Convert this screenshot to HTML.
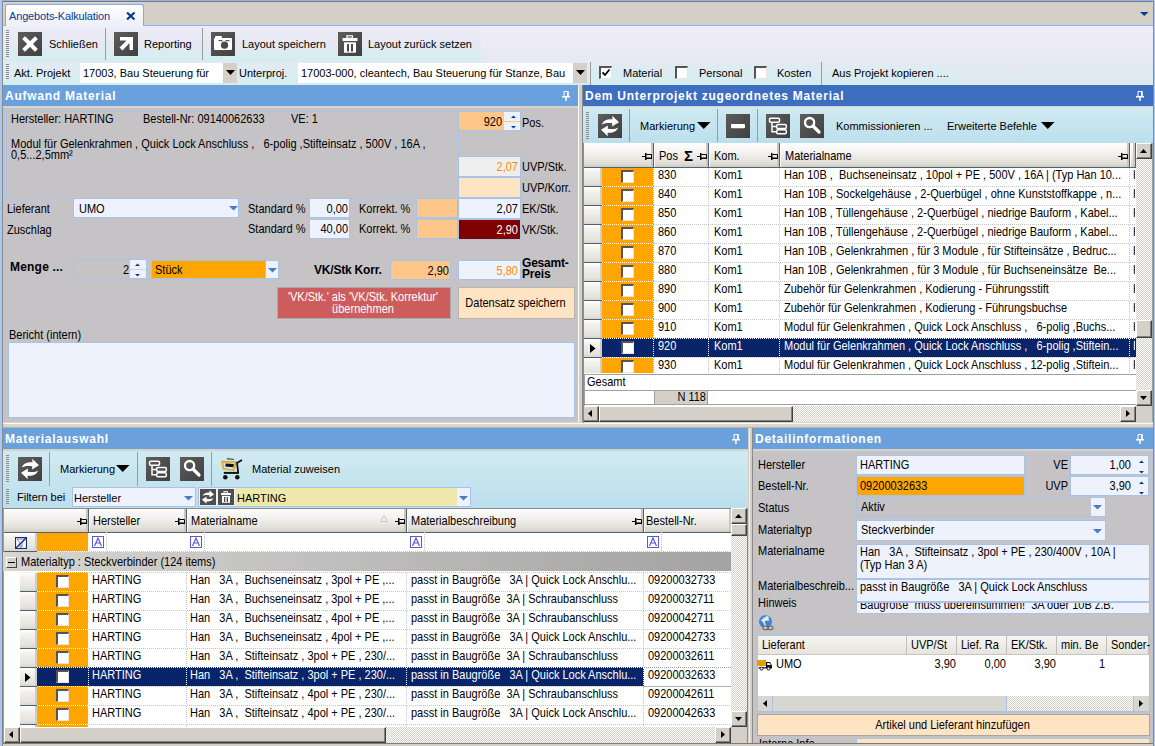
<!DOCTYPE html><html><head><meta charset="utf-8"><style>
html,body{margin:0;padding:0;}
body{width:1155px;height:746px;position:relative;overflow:hidden;background:#d4d0c8;font-family:"Liberation Sans",sans-serif;font-size:11px;color:#000;}
.a{position:absolute;box-sizing:border-box;}
.t{white-space:pre;}
</style></head><body>

<div class="a" style="left:0px;top:0px;width:1155px;height:1px;background:#8fb4ea"></div>
<div class="a" style="left:0px;top:0px;width:2px;height:746px;background:#a9c8f2"></div>
<div class="a" style="left:1154px;top:0px;width:1px;height:746px;background:#a9c8f2"></div>
<div class="a" style="left:2px;top:1px;width:1152px;height:1px;background:#7c7c7c"></div>
<div class="a" style="left:2px;top:1px;width:1px;height:745px;background:#8a8a8a"></div>
<div class="a" style="left:1153px;top:1px;width:1px;height:745px;background:#8a8a8a"></div>
<div class="a" style="left:5px;top:4px;width:139px;height:22px;background:linear-gradient(#ffffff,#eeeef8);border:1px solid #86abe0;border-bottom:none;border-radius:3px 3px 0 0"></div>
<div class="a" style="left:3px;top:25px;width:1150px;height:1px;background:#8fb4ea"></div>
<div class="a" style="left:6px;top:25px;width:137px;height:1px;background:#f4f4fb"></div>
<div class="a t" style="left:9px;top:8.86px;line-height:15px;font-size:11px;color:#0b3b8f;letter-spacing:-0.15px;">Angebots-Kalkulation</div>
<svg class="a" style="left:126px;top:12px" width="10" height="8"><path d="M1 0.5L8.5 7.5M8.5 0.5L1 7.5" stroke="#0b3b8f" stroke-width="2.2"/></svg>
<svg class="a" style="left:1140px;top:12px" width="9" height="5"><path d="M0 0H8.5L4.25 4Z" fill="#0b3b8f"/></svg>
<div class="a" style="left:3px;top:26px;width:1150px;height:59px;background:linear-gradient(#efedf8 0%,#e9e9f4 50%,#dde9ef 100%)"></div>
<div class="a" style="left:3px;top:26px;width:478px;height:36px;background:linear-gradient(#eeecf8 0%,#e6e8f4 45%,#d3eef0 100%)"></div>
<div class="a" style="left:3px;top:62px;width:957px;height:23px;background:linear-gradient(#e4eaf3 0%,#d3eef0 100%)"></div>
<div class="a" style="left:6px;top:30px;width:3px;height:28px;background:repeating-linear-gradient(#8c8c8c 0 1px,transparent 1px 2px)"></div>
<div class="a" style="left:6px;top:64px;width:3px;height:16px;background:repeating-linear-gradient(#8c8c8c 0 1px,transparent 1px 2px)"></div>
<div id="top1icons"></div>
<svg width="0" height="0" style="position:absolute"><defs><linearGradient id="ig" x1="0" y1="0" x2="1" y2="1"><stop offset="0" stop-color="#5c5c5c"/><stop offset="1" stop-color="#404040"/></linearGradient></defs></svg>
<svg class="a" style="left:18px;top:32px" width="24" height="24" viewBox="0 0 24 24"><defs></defs><rect x="0" y="0" width="24" height="24" fill="#4e4e4e"/><rect x="0" y="0" width="24" height="24" fill="url(#ig)"/><path d="M7 7L17 17M17 7L7 17" stroke="#fff" stroke-width="4" stroke-linecap="square"/></svg>
<svg class="a" style="left:114px;top:32px" width="24" height="24" viewBox="0 0 24 24"><defs></defs><rect x="0" y="0" width="24" height="24" fill="#4e4e4e"/><rect x="0" y="0" width="24" height="24" fill="url(#ig)"/><path d="M6 5H19V18H15.5V11L8.5 18.5L5.5 15.5L12.5 8.5H6Z" fill="#fff"/></svg>
<svg class="a" style="left:211px;top:32px" width="24" height="24" viewBox="0 0 24 24"><defs></defs><rect x="0" y="0" width="24" height="24" fill="#4e4e4e"/><rect x="0" y="0" width="24" height="24" fill="url(#ig)"/><path d="M3 7Q3 6 4 6H4V5Q4 4 5 4H10Q11 4 11 5V6H20Q21 6 21 7V17Q21 18 20 18H4Q3 18 3 17Z" fill="#fff"/><circle cx="13.5" cy="13.2" r="3.6" fill="#4a4a4a"/><rect x="7.5" y="8" width="4" height="1.2" fill="#555"/><rect x="14.5" y="8" width="4" height="1.2" fill="#555"/></svg>
<svg class="a" style="left:338px;top:32px" width="24" height="24" viewBox="0 0 24 24"><defs></defs><rect x="0" y="0" width="24" height="24" fill="#4e4e4e"/><rect x="0" y="0" width="24" height="24" fill="url(#ig)"/><rect x="8.3" y="3.2" width="6.7" height="3" fill="#fff"/><rect x="9.6" y="4.4" width="4.2" height="1.2" fill="#4a4a4a"/><rect x="4.6" y="6" width="14.9" height="3" fill="#fff"/><rect x="6" y="10.3" width="12" height="10.4" fill="#fff"/><rect x="9" y="12" width="2" height="7.5" fill="#4a4a4a"/><rect x="13" y="12" width="2" height="7.5" fill="#4a4a4a"/></svg>
<div class="a" style="left:105px;top:28px;width:1px;height:32px;background:#9b9b9b"></div>
<div class="a" style="left:202px;top:28px;width:1px;height:32px;background:#9b9b9b"></div>
<div class="a t" style="left:49px;top:36.86px;line-height:15px;font-size:11px;">Schließen</div>
<div class="a t" style="left:144px;top:36.86px;line-height:15px;font-size:11px;">Reporting</div>
<div class="a t" style="left:242px;top:36.86px;line-height:15px;font-size:11px;">Layout speichern</div>
<div class="a t" style="left:368px;top:36.86px;line-height:15px;font-size:11px;">Layout zurück setzen</div>
<div class="a t" style="left:14px;top:65.86px;line-height:15px;font-size:11px;">Akt. Projekt</div>
<div class="a" style="left:80px;top:63px;width:157px;height:20px;background:#fff"></div>
<div class="a" style="left:223px;top:63px;width:14px;height:20px;background:#d4d0c8"></div>
<svg class="a" style="left:226px;top:70px" width="9" height="5"><path d="M0 0H9L4.5 5Z" fill="#000"/></svg>
<div class="a t" style="left:83px;top:65.86px;line-height:15px;font-size:11px;">17003, Bau Steuerung für</div>
<div class="a t" style="left:239px;top:65.86px;line-height:15px;font-size:11px;">Unterproj.</div>
<div class="a" style="left:298px;top:63px;width:289px;height:20px;background:#fff"></div>
<div class="a" style="left:573px;top:63px;width:14px;height:20px;background:#d4d0c8"></div>
<svg class="a" style="left:576px;top:70px" width="9" height="5"><path d="M0 0H9L4.5 5Z" fill="#000"/></svg>
<div class="a t" style="left:301px;top:65.86px;line-height:15px;font-size:11px;">17003-000, cleantech, Bau Steuerung für Stanze, Bau</div>
<div class="a" style="left:590px;top:62px;width:1px;height:23px;background:#9b9b9b"></div>
<div class="a" style="left:821px;top:62px;width:1px;height:23px;background:#9b9b9b"></div>
<div class="a" style="left:599px;top:66px;width:13px;height:13px;background:#fff;border-top:2px solid #555;border-left:2px solid #555;border-right:1px solid #e6e4de;border-bottom:1px solid #e6e4de"></div>
<svg class="a" style="left:601px;top:68px" width="10" height="10"><path d="M1.5 4.5L4 7L8.5 1.5" fill="none" stroke="#000" stroke-width="1.8"/></svg>
<div class="a" style="left:675px;top:66px;width:13px;height:13px;background:#fff;border-top:2px solid #555;border-left:2px solid #555;border-right:1px solid #e6e4de;border-bottom:1px solid #e6e4de"></div>
<div class="a" style="left:754px;top:66px;width:13px;height:13px;background:#fff;border-top:2px solid #555;border-left:2px solid #555;border-right:1px solid #e6e4de;border-bottom:1px solid #e6e4de"></div>
<div class="a t" style="left:623px;top:65.86px;line-height:15px;font-size:11px;">Material</div>
<div class="a t" style="left:699px;top:65.86px;line-height:15px;font-size:11px;">Personal</div>
<div class="a t" style="left:777px;top:65.86px;line-height:15px;font-size:11px;">Kosten</div>
<div class="a t" style="left:832px;top:65.86px;line-height:15px;font-size:11px;">Aus Projekt kopieren ....</div>
<div class="a" style="left:3px;top:85px;width:575px;height:21px;background:#6aa0dc"></div>
<div class="a t" style="left:5px;top:88.03px;line-height:16px;font-size:12px;font-weight:bold;color:#fff;letter-spacing:0.75px;">Aufwand Material</div>
<svg class="a" style="left:562px;top:91px" width="8" height="10"><path d="M2 0.5H6V5.5H2Z" fill="none" stroke="#fff" stroke-width="1"/><rect x="5" y="0" width="1.6" height="6" fill="#fff"/><rect x="0" y="5" width="8" height="1.5" fill="#fff"/><rect x="3.2" y="6" width="1.5" height="4" fill="#fff"/></svg>
<div class="a" style="left:3px;top:106px;width:575px;height:2px;background:#d6d3cc"></div>
<div class="a" style="left:3px;top:108px;width:575px;height:314px;background:#c5c3c6"></div>
<div class="a" style="left:6px;top:111px;width:453px;height:88px;border:1px solid #a8c3e6"></div>
<div class="a t" style="left:11px;top:111.27px;line-height:15px;font-size:11px;transform:scaleY(1.125);transform-origin:0 0;">Hersteller: HARTING</div>
<div class="a t" style="left:143px;top:111.27px;line-height:15px;font-size:11px;transform:scaleY(1.125);transform-origin:0 0;">Bestell-Nr: 09140062633</div>
<div class="a t" style="left:291px;top:111.27px;line-height:15px;font-size:11px;transform:scaleY(1.125);transform-origin:0 0;">VE: 1</div>
<div class="a t" style="left:11px;top:136.27px;line-height:15px;font-size:11px;transform:scaleY(1.125);transform-origin:0 0;">Modul für Gelenkrahmen , Quick Lock Anschluss ,   6-polig ,Stifteinsatz , 500V , 16A ,</div>
<div class="a t" style="left:11px;top:147.27px;line-height:15px;font-size:11px;transform:scaleY(1.125);transform-origin:0 0;">0,5...2,5mm²</div>
<div class="a" style="left:458px;top:111px;width:63px;height:20px;background:#eef2fd;border:1px solid #a8c3e6"></div>
<div class="a" style="left:459px;top:112px;width:45px;height:18px;background:#ffc68a"></div>
<div class="a" style="left:504px;top:121px;width:16px;height:1px;background:#ffc68a"></div>
<svg class="a" style="left:511px;top:115px" width="5" height="14"><path d="M0 3H5L2.5 0.5Z" fill="#0b3b8f"/><path d="M0 11H5L2.5 13.5Z" fill="#0b3b8f"/></svg>
<div class="a t" style="left:202px;top:114.27px;line-height:15px;font-size:11px;transform:scaleY(1.125);transform-origin:0 0;width:300px;overflow:hidden;text-overflow:ellipsis;text-align:right;">920</div>
<div class="a t" style="left:522px;top:115.27px;line-height:15px;font-size:11px;transform:scaleY(1.125);transform-origin:0 0;">Pos.</div>
<div class="a" style="left:458px;top:156px;width:63px;height:21px;background:#eeeeee;border:1px solid #a8c3e6"></div>
<div class="a t" style="left:218px;top:159.27px;line-height:15px;font-size:11px;transform:scaleY(1.125);transform-origin:0 0;width:300px;overflow:hidden;text-overflow:ellipsis;text-align:right;color:#ff8c00;">2,07</div>
<div class="a t" style="left:522px;top:159.27px;line-height:15px;font-size:11px;transform:scaleY(1.125);transform-origin:0 0;">UVP/Stk.</div>
<div class="a" style="left:458px;top:177px;width:63px;height:21px;background:#ffe4c4;border:1px solid #a8c3e6"></div>
<div class="a t" style="left:522px;top:180.27px;line-height:15px;font-size:11px;transform:scaleY(1.125);transform-origin:0 0;">UVP/Korr.</div>
<div class="a" style="left:458px;top:198px;width:63px;height:21px;background:#eef2fd;border:1px solid #a8c3e6"></div>
<div class="a t" style="left:218px;top:201.27px;line-height:15px;font-size:11px;transform:scaleY(1.125);transform-origin:0 0;width:300px;overflow:hidden;text-overflow:ellipsis;text-align:right;">2,07</div>
<div class="a t" style="left:522px;top:201.27px;line-height:15px;font-size:11px;transform:scaleY(1.125);transform-origin:0 0;">EK/Stk.</div>
<div class="a" style="left:458px;top:219px;width:63px;height:21px;background:#800000;border:1px solid #a8c3e6"></div>
<div class="a t" style="left:218px;top:222.27px;line-height:15px;font-size:11px;transform:scaleY(1.125);transform-origin:0 0;width:300px;overflow:hidden;text-overflow:ellipsis;text-align:right;color:#fff;">2,90</div>
<div class="a t" style="left:522px;top:222.27px;line-height:15px;font-size:11px;transform:scaleY(1.125);transform-origin:0 0;">VK/Stk.</div>
<div class="a t" style="left:7px;top:201.27px;line-height:15px;font-size:11px;transform:scaleY(1.125);transform-origin:0 0;">Lieferant</div>
<div class="a" style="left:73px;top:198px;width:166px;height:20px;background:#eef2fd;border:1px solid #a8c3e6"></div>
<div class="a t" style="left:79px;top:201.27px;line-height:15px;font-size:11px;transform:scaleY(1.125);transform-origin:0 0;">UMO</div>
<svg class="a" style="left:229px;top:206px" width="9" height="5"><path d="M0 0H9L4.5 4.5Z" fill="#4a7cc0"/></svg>
<div class="a t" style="left:7px;top:222.27px;line-height:15px;font-size:11px;transform:scaleY(1.125);transform-origin:0 0;">Zuschlag</div>
<div class="a t" style="left:248px;top:201.27px;line-height:15px;font-size:11px;transform:scaleY(1.125);transform-origin:0 0;">Standard %</div>
<div class="a t" style="left:248px;top:221.27px;line-height:15px;font-size:11px;transform:scaleY(1.125);transform-origin:0 0;">Standard %</div>
<div class="a" style="left:309px;top:198px;width:41px;height:20px;background:#eef2fd;border:1px solid #a8c3e6"></div>
<div class="a t" style="left:48px;top:201.27px;line-height:15px;font-size:11px;transform:scaleY(1.125);transform-origin:0 0;width:300px;overflow:hidden;text-overflow:ellipsis;text-align:right;">0,00</div>
<div class="a" style="left:309px;top:219px;width:41px;height:20px;background:#eef2fd;border:1px solid #a8c3e6"></div>
<div class="a t" style="left:48px;top:221.27px;line-height:15px;font-size:11px;transform:scaleY(1.125);transform-origin:0 0;width:300px;overflow:hidden;text-overflow:ellipsis;text-align:right;">40,00</div>
<div class="a t" style="left:359px;top:201.27px;line-height:15px;font-size:11px;transform:scaleY(1.125);transform-origin:0 0;">Korrekt. %</div>
<div class="a t" style="left:359px;top:221.27px;line-height:15px;font-size:11px;transform:scaleY(1.125);transform-origin:0 0;">Korrekt. %</div>
<div class="a" style="left:416px;top:198px;width:42px;height:20px;background:#ffc68a;border:1px solid #a8c3e6"></div>
<div class="a" style="left:416px;top:219px;width:42px;height:20px;background:#ffc68a;border:1px solid #a8c3e6"></div>
<div class="a t" style="left:10px;top:259.03px;line-height:16px;font-size:12px;font-weight:bold;letter-spacing:-0.2px;letter-spacing:0.2px;">Menge ...</div>
<div class="a" style="left:73px;top:259px;width:74px;height:20px;background:#c5c3c6;border:1px solid #a8c3e6"></div>
<div class="a" style="left:130px;top:260px;width:16px;height:18px;background:#eef2fd"></div>
<div class="a" style="left:130px;top:269px;width:16px;height:1px;background:#c8d4e8"></div>
<svg class="a" style="left:135px;top:263px" width="5" height="14"><path d="M0 3H5L2.5 0.5Z" fill="#0b3b8f"/><path d="M0 11H5L2.5 13.5Z" fill="#0b3b8f"/></svg>
<div class="a t" style="left:-171px;top:262.27px;line-height:15px;font-size:11px;transform:scaleY(1.125);transform-origin:0 0;width:300px;overflow:hidden;text-overflow:ellipsis;text-align:right;">2</div>
<div class="a" style="left:151px;top:260px;width:128px;height:19px;background:#ffa500;border:1px solid #a8c3e6"></div>
<div class="a" style="left:265px;top:260px;width:14px;height:19px;background:#eef2fd;border:1px solid #a8c3e6"></div>
<svg class="a" style="left:268px;top:268px" width="9" height="5"><path d="M0 0H9L4.5 4.5Z" fill="#4a7cc0"/></svg>
<div class="a t" style="left:155px;top:262.27px;line-height:15px;font-size:11px;transform:scaleY(1.125);transform-origin:0 0;">Stück</div>
<div class="a t" style="left:314px;top:262.03px;line-height:16px;font-size:12px;font-weight:bold;letter-spacing:-0.2px;">VK/Stk Korr.</div>
<div class="a" style="left:390px;top:260px;width:61px;height:20px;background:#ffc68a;border:1px solid #a8c3e6"></div>
<div class="a t" style="left:149px;top:263.27px;line-height:15px;font-size:11px;transform:scaleY(1.125);transform-origin:0 0;width:300px;overflow:hidden;text-overflow:ellipsis;text-align:right;">2,90</div>
<div class="a" style="left:458px;top:260px;width:63px;height:20px;background:#eef2fd;border:1px solid #a8c3e6"></div>
<div class="a t" style="left:218px;top:263.27px;line-height:15px;font-size:11px;transform:scaleY(1.125);transform-origin:0 0;width:300px;overflow:hidden;text-overflow:ellipsis;text-align:right;color:#ff8c00;">5,80</div>
<div class="a t" style="left:522px;top:255.03px;line-height:16px;font-size:12px;font-weight:bold;letter-spacing:-0.2px;">Gesamt-</div>
<div class="a t" style="left:522px;top:266.03px;line-height:16px;font-size:12px;font-weight:bold;letter-spacing:-0.2px;">Preis</div>
<div class="a" style="left:277px;top:287px;width:174px;height:32px;background:#cd5c5c;border:1px solid #b0a8a8"></div>
<div class="a t" style="left:276px;top:289.27px;line-height:15px;font-size:11px;transform:scaleY(1.125);transform-origin:0 0;width:174px;overflow:hidden;text-overflow:ellipsis;text-align:center;color:#fff;">&#x27;VK/Stk.&#x27; als &#x27;VK/Stk. Korrektur&#x27;</div>
<div class="a t" style="left:276px;top:301.27px;line-height:15px;font-size:11px;transform:scaleY(1.125);transform-origin:0 0;width:174px;overflow:hidden;text-overflow:ellipsis;text-align:center;color:#fff;">übernehmen</div>
<div class="a" style="left:458px;top:287px;width:117px;height:32px;background:#ffe4c4;border:1px solid #b8b4b0"></div>
<div class="a t" style="left:457px;top:295.27px;line-height:15px;font-size:11px;transform:scaleY(1.125);transform-origin:0 0;width:117px;overflow:hidden;text-overflow:ellipsis;text-align:center;">Datensatz speichern</div>
<div class="a t" style="left:9px;top:327.27px;line-height:15px;font-size:11px;transform:scaleY(1.125);transform-origin:0 0;">Bericht (intern)</div>
<div class="a" style="left:8px;top:342px;width:567px;height:76px;background:#eef2fd;border:1px solid #a8c3e6"></div>
<div class="a" style="left:578px;top:85px;width:5px;height:337px;background:#d4d0c8"></div>
<div class="a" style="left:578px;top:85px;width:1px;height:337px;background:#fbfaf6"></div>
<div class="a" style="left:582px;top:85px;width:1px;height:337px;background:#8a8a8a"></div>
<div class="a" style="left:3px;top:422px;width:1150px;height:6px;background:#d8d5cd"></div>
<div class="a" style="left:3px;top:423px;width:1150px;height:1px;background:#fbfaf6"></div>
<div class="a" style="left:3px;top:427px;width:1150px;height:1px;background:#b8b4ac"></div>
<div class="a" style="left:583px;top:85px;width:570px;height:21px;background:#3d6ec0"></div>
<div class="a t" style="left:585px;top:88.03px;line-height:16px;font-size:12px;font-weight:bold;color:#fff;letter-spacing:0.75px;">Dem Unterprojekt zugeordnetes Material</div>
<svg class="a" style="left:1136px;top:91px" width="8" height="10"><path d="M2 0.5H6V5.5H2Z" fill="none" stroke="#fff" stroke-width="1"/><rect x="5" y="0" width="1.6" height="6" fill="#fff"/><rect x="0" y="5" width="8" height="1.5" fill="#fff"/><rect x="3.2" y="6" width="1.5" height="4" fill="#fff"/></svg>
<div class="a" style="left:583px;top:106px;width:570px;height:1px;background:#d6d3cc"></div>
<div class="a" style="left:583px;top:107px;width:570px;height:36px;background:linear-gradient(#d0eaf1,#bcdfed)"></div>
<div class="a" style="left:586px;top:112px;width:3px;height:28px;background:repeating-linear-gradient(#8c8c8c 0 1px,transparent 1px 2px)"></div>
<svg class="a" style="left:598px;top:114px" width="24" height="24" viewBox="0 0 24 24"><defs></defs><rect x="0" y="0" width="24" height="24" fill="#4e4e4e"/><rect x="0" y="0" width="24" height="24" fill="url(#ig)"/><path d="M4 10.5C5 6.5 9 4.8 14.5 5.2L14.2 1.8L21 8.2L14 12.6L14.3 9.2C9.5 8.6 6 9 4 10.5Z" fill="#fff"/><path d="M20 13.5C19 17.5 15 19.2 9.5 18.8L9.8 22.2L3 15.8L10 11.4L9.7 14.8C14.5 15.4 18 15 20 13.5Z" fill="#fff"/></svg>
<div class="a" style="left:629px;top:109px;width:1px;height:33px;background:#9b9b9b"></div>
<div class="a t" style="left:640px;top:118.86px;line-height:15px;font-size:11px;">Markierung</div>
<svg class="a" style="left:697px;top:122px" width="14" height="8"><path d="M0 0H13.5L6.75 7Z" fill="#000"/></svg>
<div class="a" style="left:717px;top:109px;width:1px;height:33px;background:#9b9b9b"></div>
<svg class="a" style="left:726px;top:114px" width="24" height="24" viewBox="0 0 24 24"><defs></defs><rect x="0" y="0" width="24" height="24" fill="#4e4e4e"/><rect x="0" y="0" width="24" height="24" fill="url(#ig)"/><rect x="5" y="10" width="14" height="4.2" rx="1" fill="#fff"/></svg>
<div class="a" style="left:757px;top:109px;width:1px;height:33px;background:#9b9b9b"></div>
<svg class="a" style="left:766px;top:114px" width="24" height="24" viewBox="0 0 24 24"><defs></defs><rect x="0" y="0" width="24" height="24" fill="#4e4e4e"/><rect x="0" y="0" width="24" height="24" fill="url(#ig)"/><g fill="none" stroke="#fff" stroke-width="1.5"><rect x="3.5" y="4.2" width="10" height="4" rx="1.2"/><rect x="10.7" y="10.5" width="9.6" height="4" rx="1.2"/><rect x="10.7" y="15.7" width="9.6" height="4" rx="1.2"/><path d="M6 8.2V17.7H10.7M6 12.5H10.7"/></g></svg>
<svg class="a" style="left:800px;top:114px" width="24" height="24" viewBox="0 0 24 24"><defs></defs><rect x="0" y="0" width="24" height="24" fill="#4e4e4e"/><rect x="0" y="0" width="24" height="24" fill="url(#ig)"/><circle cx="9.6" cy="8.6" r="4.6" fill="none" stroke="#fff" stroke-width="2.3"/><path d="M13 12L19 18" stroke="#fff" stroke-width="3.2" stroke-linecap="round"/></svg>
<div class="a t" style="left:836px;top:118.86px;line-height:15px;font-size:11px;">Kommissionieren ...</div>
<div class="a t" style="left:947px;top:118.86px;line-height:15px;font-size:11px;">Erweiterte Befehle</div>
<svg class="a" style="left:1041px;top:122px" width="14" height="8"><path d="M0 0H13.5L6.75 7Z" fill="#000"/></svg>
<div class="a" style="left:583px;top:143px;width:570px;height:279px;background:#fff"></div>
<div class="a" style="left:1152px;top:143px;width:1px;height:279px;background:#a0a0a0"></div>
<div class="a" style="left:583px;top:143px;width:569px;height:1px;background:#8a8a8a"></div>
<div class="a" style="left:583px;top:143px;width:71px;height:24px;background:linear-gradient(#fefefe,#f1f0ec 45%,#e2e0d9 82%,#d0cdc5);border-right:1px solid #4f6470;box-shadow:inset -2px 0 0 #c9c7c0,inset 1px 0 0 #fff"></div>
<svg class="a" style="left:642px;top:153px" width="10" height="7"><rect x="0" y="3" width="3" height="1" fill="#000"/><rect x="3" y="0" width="1.5" height="7" fill="#000"/><path d="M4.5 1.5H9.5V5.5H4.5" fill="none" stroke="#000" stroke-width="1"/><rect x="4" y="4.5" width="6" height="1.5" fill="#000"/></svg>
<div class="a" style="left:654px;top:143px;width:55px;height:24px;background:linear-gradient(#fefefe,#f1f0ec 45%,#e2e0d9 82%,#d0cdc5);border-right:1px solid #4f6470;box-shadow:inset -2px 0 0 #c9c7c0,inset 1px 0 0 #fff"></div>
<div class="a t" style="left:659px;top:148.27px;line-height:15px;font-size:11px;transform:scaleY(1.125);transform-origin:0 0;">Pos</div>
<svg class="a" style="left:697px;top:153px" width="10" height="7"><rect x="0" y="3" width="3" height="1" fill="#000"/><rect x="3" y="0" width="1.5" height="7" fill="#000"/><path d="M4.5 1.5H9.5V5.5H4.5" fill="none" stroke="#000" stroke-width="1"/><rect x="4" y="4.5" width="6" height="1.5" fill="#000"/></svg>
<div class="a t" style="left:684px;top:148px;font-size:15px;font-weight:bold;line-height:16px">&#931;</div>
<div class="a" style="left:709px;top:143px;width:71px;height:24px;background:linear-gradient(#fefefe,#f1f0ec 45%,#e2e0d9 82%,#d0cdc5);border-right:1px solid #4f6470;box-shadow:inset -2px 0 0 #c9c7c0,inset 1px 0 0 #fff"></div>
<div class="a t" style="left:714px;top:148.27px;line-height:15px;font-size:11px;transform:scaleY(1.125);transform-origin:0 0;">Kom.</div>
<svg class="a" style="left:768px;top:153px" width="10" height="7"><rect x="0" y="3" width="3" height="1" fill="#000"/><rect x="3" y="0" width="1.5" height="7" fill="#000"/><path d="M4.5 1.5H9.5V5.5H4.5" fill="none" stroke="#000" stroke-width="1"/><rect x="4" y="4.5" width="6" height="1.5" fill="#000"/></svg>
<div class="a" style="left:780px;top:143px;width:350px;height:24px;background:linear-gradient(#fefefe,#f1f0ec 45%,#e2e0d9 82%,#d0cdc5);border-right:1px solid #4f6470;box-shadow:inset -2px 0 0 #c9c7c0,inset 1px 0 0 #fff"></div>
<div class="a t" style="left:785px;top:148.27px;line-height:15px;font-size:11px;transform:scaleY(1.125);transform-origin:0 0;">Materialname</div>
<svg class="a" style="left:1118px;top:153px" width="10" height="7"><rect x="0" y="3" width="3" height="1" fill="#000"/><rect x="3" y="0" width="1.5" height="7" fill="#000"/><path d="M4.5 1.5H9.5V5.5H4.5" fill="none" stroke="#000" stroke-width="1"/><rect x="4" y="4.5" width="6" height="1.5" fill="#000"/></svg>
<div class="a" style="left:1130px;top:143px;width:6px;height:24px;background:linear-gradient(#fefefe,#f1f0ec 45%,#e2e0d9 82%,#d0cdc5);border-right:1px solid #4f6470;box-shadow:inset -2px 0 0 #c9c7c0,inset 1px 0 0 #fff"></div>
<div class="a" style="left:583px;top:167px;width:553px;height:1px;background:#4f6470"></div>
<div class="a" style="left:584px;top:167px;width:18px;height:19px;background:linear-gradient(#ffffff,#f2f1ed 25%,#e4e2dc 85%,#d6d4ce);border-top:1px solid #4f6470;box-shadow:inset -2px 0 0 #cfcdc6"></div>
<div class="a" style="left:602px;top:168px;width:534px;height:18px;background:#fff"></div>
<div class="a" style="left:602px;top:168px;width:52px;height:18px;background:#ffa500"></div>
<div class="a" style="left:653px;top:168px;width:1px;height:18px;background:repeating-linear-gradient(#fff 0 1px,transparent 1px 2px)"></div>
<div class="a" style="left:708px;top:168px;width:1px;height:18px;background:repeating-linear-gradient(#c4c4c4 0 1px,transparent 1px 2px)"></div>
<div class="a" style="left:779px;top:168px;width:1px;height:18px;background:repeating-linear-gradient(#c4c4c4 0 1px,transparent 1px 2px)"></div>
<div class="a" style="left:1129px;top:168px;width:1px;height:18px;background:repeating-linear-gradient(#c4c4c4 0 1px,transparent 1px 2px)"></div>
<div class="a" style="left:621px;top:170px;width:13px;height:13px;background:#fff;border-top:2px solid #555;border-left:2px solid #555;border-right:1px solid #e6e4de;border-bottom:1px solid #e6e4de"></div>
<div class="a t" style="left:658px;top:167.27px;line-height:15px;font-size:11px;transform:scaleY(1.125);transform-origin:0 0;color:#000;">830</div>
<div class="a t" style="left:714px;top:167.27px;line-height:15px;font-size:11px;transform:scaleY(1.125);transform-origin:0 0;color:#000;">Kom1</div>
<div class="a t" style="left:784px;top:167.27px;line-height:15px;font-size:11px;transform:scaleY(1.125);transform-origin:0 0;width:342px;overflow:hidden;text-overflow:ellipsis;color:#000;">Han 10B ,  Buchseneinsatz , 10pol + PE , 500V , 16A | (Typ Han 10...</div>
<div class="a t" style="left:1133px;top:167.27px;line-height:15px;font-size:11px;transform:scaleY(1.125);transform-origin:0 0;width:2px;overflow:hidden;text-overflow:ellipsis;color:#000;">H</div>
<div class="a" style="left:584px;top:186px;width:18px;height:19px;background:linear-gradient(#ffffff,#f2f1ed 25%,#e4e2dc 85%,#d6d4ce);border-top:1px solid #4f6470;box-shadow:inset -2px 0 0 #cfcdc6"></div>
<div class="a" style="left:602px;top:186px;width:534px;height:19px;background:#fff"></div>
<div class="a" style="left:602px;top:186px;width:52px;height:19px;background:#ffa500"></div>
<div class="a" style="left:602px;top:186px;width:534px;height:1px;background:repeating-linear-gradient(90deg,#c4c4c4 0 1px,transparent 1px 2px)"></div>
<div class="a" style="left:602px;top:186px;width:52px;height:1px;background:repeating-linear-gradient(90deg,#fff 0 1px,transparent 1px 2px)"></div>
<div class="a" style="left:653px;top:187px;width:1px;height:18px;background:repeating-linear-gradient(#fff 0 1px,transparent 1px 2px)"></div>
<div class="a" style="left:708px;top:187px;width:1px;height:18px;background:repeating-linear-gradient(#c4c4c4 0 1px,transparent 1px 2px)"></div>
<div class="a" style="left:779px;top:187px;width:1px;height:18px;background:repeating-linear-gradient(#c4c4c4 0 1px,transparent 1px 2px)"></div>
<div class="a" style="left:1129px;top:187px;width:1px;height:18px;background:repeating-linear-gradient(#c4c4c4 0 1px,transparent 1px 2px)"></div>
<div class="a" style="left:621px;top:189px;width:13px;height:13px;background:#fff;border-top:2px solid #555;border-left:2px solid #555;border-right:1px solid #e6e4de;border-bottom:1px solid #e6e4de"></div>
<div class="a t" style="left:658px;top:186.27px;line-height:15px;font-size:11px;transform:scaleY(1.125);transform-origin:0 0;color:#000;">840</div>
<div class="a t" style="left:714px;top:186.27px;line-height:15px;font-size:11px;transform:scaleY(1.125);transform-origin:0 0;color:#000;">Kom1</div>
<div class="a t" style="left:784px;top:186.27px;line-height:15px;font-size:11px;transform:scaleY(1.125);transform-origin:0 0;width:342px;overflow:hidden;text-overflow:ellipsis;color:#000;">Han 10B , Sockelgehäuse , 2-Querbügel , ohne Kunststoffkappe , n...</div>
<div class="a t" style="left:1133px;top:186.27px;line-height:15px;font-size:11px;transform:scaleY(1.125);transform-origin:0 0;width:2px;overflow:hidden;text-overflow:ellipsis;color:#000;">H</div>
<div class="a" style="left:584px;top:205px;width:18px;height:19px;background:linear-gradient(#ffffff,#f2f1ed 25%,#e4e2dc 85%,#d6d4ce);border-top:1px solid #4f6470;box-shadow:inset -2px 0 0 #cfcdc6"></div>
<div class="a" style="left:602px;top:205px;width:534px;height:19px;background:#fff"></div>
<div class="a" style="left:602px;top:205px;width:52px;height:19px;background:#ffa500"></div>
<div class="a" style="left:602px;top:205px;width:534px;height:1px;background:repeating-linear-gradient(90deg,#c4c4c4 0 1px,transparent 1px 2px)"></div>
<div class="a" style="left:602px;top:205px;width:52px;height:1px;background:repeating-linear-gradient(90deg,#fff 0 1px,transparent 1px 2px)"></div>
<div class="a" style="left:653px;top:206px;width:1px;height:18px;background:repeating-linear-gradient(#fff 0 1px,transparent 1px 2px)"></div>
<div class="a" style="left:708px;top:206px;width:1px;height:18px;background:repeating-linear-gradient(#c4c4c4 0 1px,transparent 1px 2px)"></div>
<div class="a" style="left:779px;top:206px;width:1px;height:18px;background:repeating-linear-gradient(#c4c4c4 0 1px,transparent 1px 2px)"></div>
<div class="a" style="left:1129px;top:206px;width:1px;height:18px;background:repeating-linear-gradient(#c4c4c4 0 1px,transparent 1px 2px)"></div>
<div class="a" style="left:621px;top:208px;width:13px;height:13px;background:#fff;border-top:2px solid #555;border-left:2px solid #555;border-right:1px solid #e6e4de;border-bottom:1px solid #e6e4de"></div>
<div class="a t" style="left:658px;top:205.27px;line-height:15px;font-size:11px;transform:scaleY(1.125);transform-origin:0 0;color:#000;">850</div>
<div class="a t" style="left:714px;top:205.27px;line-height:15px;font-size:11px;transform:scaleY(1.125);transform-origin:0 0;color:#000;">Kom1</div>
<div class="a t" style="left:784px;top:205.27px;line-height:15px;font-size:11px;transform:scaleY(1.125);transform-origin:0 0;width:342px;overflow:hidden;text-overflow:ellipsis;color:#000;">Han 10B , Tüllengehäuse , 2-Querbügel , niedrige Bauform , Kabel...</div>
<div class="a t" style="left:1133px;top:205.27px;line-height:15px;font-size:11px;transform:scaleY(1.125);transform-origin:0 0;width:2px;overflow:hidden;text-overflow:ellipsis;color:#000;">H</div>
<div class="a" style="left:584px;top:224px;width:18px;height:19px;background:linear-gradient(#ffffff,#f2f1ed 25%,#e4e2dc 85%,#d6d4ce);border-top:1px solid #4f6470;box-shadow:inset -2px 0 0 #cfcdc6"></div>
<div class="a" style="left:602px;top:224px;width:534px;height:19px;background:#fff"></div>
<div class="a" style="left:602px;top:224px;width:52px;height:19px;background:#ffa500"></div>
<div class="a" style="left:602px;top:224px;width:534px;height:1px;background:repeating-linear-gradient(90deg,#c4c4c4 0 1px,transparent 1px 2px)"></div>
<div class="a" style="left:602px;top:224px;width:52px;height:1px;background:repeating-linear-gradient(90deg,#fff 0 1px,transparent 1px 2px)"></div>
<div class="a" style="left:653px;top:225px;width:1px;height:18px;background:repeating-linear-gradient(#fff 0 1px,transparent 1px 2px)"></div>
<div class="a" style="left:708px;top:225px;width:1px;height:18px;background:repeating-linear-gradient(#c4c4c4 0 1px,transparent 1px 2px)"></div>
<div class="a" style="left:779px;top:225px;width:1px;height:18px;background:repeating-linear-gradient(#c4c4c4 0 1px,transparent 1px 2px)"></div>
<div class="a" style="left:1129px;top:225px;width:1px;height:18px;background:repeating-linear-gradient(#c4c4c4 0 1px,transparent 1px 2px)"></div>
<div class="a" style="left:621px;top:227px;width:13px;height:13px;background:#fff;border-top:2px solid #555;border-left:2px solid #555;border-right:1px solid #e6e4de;border-bottom:1px solid #e6e4de"></div>
<div class="a t" style="left:658px;top:224.27px;line-height:15px;font-size:11px;transform:scaleY(1.125);transform-origin:0 0;color:#000;">860</div>
<div class="a t" style="left:714px;top:224.27px;line-height:15px;font-size:11px;transform:scaleY(1.125);transform-origin:0 0;color:#000;">Kom1</div>
<div class="a t" style="left:784px;top:224.27px;line-height:15px;font-size:11px;transform:scaleY(1.125);transform-origin:0 0;width:342px;overflow:hidden;text-overflow:ellipsis;color:#000;">Han 10B , Tüllengehäuse , 2-Querbügel , niedrige Bauform , Kabel...</div>
<div class="a t" style="left:1133px;top:224.27px;line-height:15px;font-size:11px;transform:scaleY(1.125);transform-origin:0 0;width:2px;overflow:hidden;text-overflow:ellipsis;color:#000;">H</div>
<div class="a" style="left:584px;top:243px;width:18px;height:19px;background:linear-gradient(#ffffff,#f2f1ed 25%,#e4e2dc 85%,#d6d4ce);border-top:1px solid #4f6470;box-shadow:inset -2px 0 0 #cfcdc6"></div>
<div class="a" style="left:602px;top:243px;width:534px;height:19px;background:#fff"></div>
<div class="a" style="left:602px;top:243px;width:52px;height:19px;background:#ffa500"></div>
<div class="a" style="left:602px;top:243px;width:534px;height:1px;background:repeating-linear-gradient(90deg,#c4c4c4 0 1px,transparent 1px 2px)"></div>
<div class="a" style="left:602px;top:243px;width:52px;height:1px;background:repeating-linear-gradient(90deg,#fff 0 1px,transparent 1px 2px)"></div>
<div class="a" style="left:653px;top:244px;width:1px;height:18px;background:repeating-linear-gradient(#fff 0 1px,transparent 1px 2px)"></div>
<div class="a" style="left:708px;top:244px;width:1px;height:18px;background:repeating-linear-gradient(#c4c4c4 0 1px,transparent 1px 2px)"></div>
<div class="a" style="left:779px;top:244px;width:1px;height:18px;background:repeating-linear-gradient(#c4c4c4 0 1px,transparent 1px 2px)"></div>
<div class="a" style="left:1129px;top:244px;width:1px;height:18px;background:repeating-linear-gradient(#c4c4c4 0 1px,transparent 1px 2px)"></div>
<div class="a" style="left:621px;top:246px;width:13px;height:13px;background:#fff;border-top:2px solid #555;border-left:2px solid #555;border-right:1px solid #e6e4de;border-bottom:1px solid #e6e4de"></div>
<div class="a t" style="left:658px;top:243.27px;line-height:15px;font-size:11px;transform:scaleY(1.125);transform-origin:0 0;color:#000;">870</div>
<div class="a t" style="left:714px;top:243.27px;line-height:15px;font-size:11px;transform:scaleY(1.125);transform-origin:0 0;color:#000;">Kom1</div>
<div class="a t" style="left:784px;top:243.27px;line-height:15px;font-size:11px;transform:scaleY(1.125);transform-origin:0 0;width:342px;overflow:hidden;text-overflow:ellipsis;color:#000;">Han 10B , Gelenkrahmen , für 3 Module , für Stifteinsätze , Bedruc...</div>
<div class="a t" style="left:1133px;top:243.27px;line-height:15px;font-size:11px;transform:scaleY(1.125);transform-origin:0 0;width:2px;overflow:hidden;text-overflow:ellipsis;color:#000;">H</div>
<div class="a" style="left:584px;top:262px;width:18px;height:19px;background:linear-gradient(#ffffff,#f2f1ed 25%,#e4e2dc 85%,#d6d4ce);border-top:1px solid #4f6470;box-shadow:inset -2px 0 0 #cfcdc6"></div>
<div class="a" style="left:602px;top:262px;width:534px;height:19px;background:#fff"></div>
<div class="a" style="left:602px;top:262px;width:52px;height:19px;background:#ffa500"></div>
<div class="a" style="left:602px;top:262px;width:534px;height:1px;background:repeating-linear-gradient(90deg,#c4c4c4 0 1px,transparent 1px 2px)"></div>
<div class="a" style="left:602px;top:262px;width:52px;height:1px;background:repeating-linear-gradient(90deg,#fff 0 1px,transparent 1px 2px)"></div>
<div class="a" style="left:653px;top:263px;width:1px;height:18px;background:repeating-linear-gradient(#fff 0 1px,transparent 1px 2px)"></div>
<div class="a" style="left:708px;top:263px;width:1px;height:18px;background:repeating-linear-gradient(#c4c4c4 0 1px,transparent 1px 2px)"></div>
<div class="a" style="left:779px;top:263px;width:1px;height:18px;background:repeating-linear-gradient(#c4c4c4 0 1px,transparent 1px 2px)"></div>
<div class="a" style="left:1129px;top:263px;width:1px;height:18px;background:repeating-linear-gradient(#c4c4c4 0 1px,transparent 1px 2px)"></div>
<div class="a" style="left:621px;top:265px;width:13px;height:13px;background:#fff;border-top:2px solid #555;border-left:2px solid #555;border-right:1px solid #e6e4de;border-bottom:1px solid #e6e4de"></div>
<div class="a t" style="left:658px;top:262.27px;line-height:15px;font-size:11px;transform:scaleY(1.125);transform-origin:0 0;color:#000;">880</div>
<div class="a t" style="left:714px;top:262.27px;line-height:15px;font-size:11px;transform:scaleY(1.125);transform-origin:0 0;color:#000;">Kom1</div>
<div class="a t" style="left:784px;top:262.27px;line-height:15px;font-size:11px;transform:scaleY(1.125);transform-origin:0 0;width:342px;overflow:hidden;text-overflow:ellipsis;color:#000;">Han 10B , Gelenkrahmen , für 3 Module , für Buchseneinsätze  Be...</div>
<div class="a t" style="left:1133px;top:262.27px;line-height:15px;font-size:11px;transform:scaleY(1.125);transform-origin:0 0;width:2px;overflow:hidden;text-overflow:ellipsis;color:#000;">H</div>
<div class="a" style="left:584px;top:281px;width:18px;height:19px;background:linear-gradient(#ffffff,#f2f1ed 25%,#e4e2dc 85%,#d6d4ce);border-top:1px solid #4f6470;box-shadow:inset -2px 0 0 #cfcdc6"></div>
<div class="a" style="left:602px;top:281px;width:534px;height:19px;background:#fff"></div>
<div class="a" style="left:602px;top:281px;width:52px;height:19px;background:#ffa500"></div>
<div class="a" style="left:602px;top:281px;width:534px;height:1px;background:repeating-linear-gradient(90deg,#c4c4c4 0 1px,transparent 1px 2px)"></div>
<div class="a" style="left:602px;top:281px;width:52px;height:1px;background:repeating-linear-gradient(90deg,#fff 0 1px,transparent 1px 2px)"></div>
<div class="a" style="left:653px;top:282px;width:1px;height:18px;background:repeating-linear-gradient(#fff 0 1px,transparent 1px 2px)"></div>
<div class="a" style="left:708px;top:282px;width:1px;height:18px;background:repeating-linear-gradient(#c4c4c4 0 1px,transparent 1px 2px)"></div>
<div class="a" style="left:779px;top:282px;width:1px;height:18px;background:repeating-linear-gradient(#c4c4c4 0 1px,transparent 1px 2px)"></div>
<div class="a" style="left:1129px;top:282px;width:1px;height:18px;background:repeating-linear-gradient(#c4c4c4 0 1px,transparent 1px 2px)"></div>
<div class="a" style="left:621px;top:284px;width:13px;height:13px;background:#fff;border-top:2px solid #555;border-left:2px solid #555;border-right:1px solid #e6e4de;border-bottom:1px solid #e6e4de"></div>
<div class="a t" style="left:658px;top:281.27px;line-height:15px;font-size:11px;transform:scaleY(1.125);transform-origin:0 0;color:#000;">890</div>
<div class="a t" style="left:714px;top:281.27px;line-height:15px;font-size:11px;transform:scaleY(1.125);transform-origin:0 0;color:#000;">Kom1</div>
<div class="a t" style="left:784px;top:281.27px;line-height:15px;font-size:11px;transform:scaleY(1.125);transform-origin:0 0;width:342px;overflow:hidden;text-overflow:ellipsis;color:#000;">Zubehör für Gelenkrahmen , Kodierung - Führungsstift</div>
<div class="a t" style="left:1133px;top:281.27px;line-height:15px;font-size:11px;transform:scaleY(1.125);transform-origin:0 0;width:2px;overflow:hidden;text-overflow:ellipsis;color:#000;">H</div>
<div class="a" style="left:584px;top:300px;width:18px;height:19px;background:linear-gradient(#ffffff,#f2f1ed 25%,#e4e2dc 85%,#d6d4ce);border-top:1px solid #4f6470;box-shadow:inset -2px 0 0 #cfcdc6"></div>
<div class="a" style="left:602px;top:300px;width:534px;height:19px;background:#fff"></div>
<div class="a" style="left:602px;top:300px;width:52px;height:19px;background:#ffa500"></div>
<div class="a" style="left:602px;top:300px;width:534px;height:1px;background:repeating-linear-gradient(90deg,#c4c4c4 0 1px,transparent 1px 2px)"></div>
<div class="a" style="left:602px;top:300px;width:52px;height:1px;background:repeating-linear-gradient(90deg,#fff 0 1px,transparent 1px 2px)"></div>
<div class="a" style="left:653px;top:301px;width:1px;height:18px;background:repeating-linear-gradient(#fff 0 1px,transparent 1px 2px)"></div>
<div class="a" style="left:708px;top:301px;width:1px;height:18px;background:repeating-linear-gradient(#c4c4c4 0 1px,transparent 1px 2px)"></div>
<div class="a" style="left:779px;top:301px;width:1px;height:18px;background:repeating-linear-gradient(#c4c4c4 0 1px,transparent 1px 2px)"></div>
<div class="a" style="left:1129px;top:301px;width:1px;height:18px;background:repeating-linear-gradient(#c4c4c4 0 1px,transparent 1px 2px)"></div>
<div class="a" style="left:621px;top:303px;width:13px;height:13px;background:#fff;border-top:2px solid #555;border-left:2px solid #555;border-right:1px solid #e6e4de;border-bottom:1px solid #e6e4de"></div>
<div class="a t" style="left:658px;top:300.27px;line-height:15px;font-size:11px;transform:scaleY(1.125);transform-origin:0 0;color:#000;">900</div>
<div class="a t" style="left:714px;top:300.27px;line-height:15px;font-size:11px;transform:scaleY(1.125);transform-origin:0 0;color:#000;">Kom1</div>
<div class="a t" style="left:784px;top:300.27px;line-height:15px;font-size:11px;transform:scaleY(1.125);transform-origin:0 0;width:342px;overflow:hidden;text-overflow:ellipsis;color:#000;">Zubehör für Gelenkrahmen , Kodierung - Führungsbuchse</div>
<div class="a t" style="left:1133px;top:300.27px;line-height:15px;font-size:11px;transform:scaleY(1.125);transform-origin:0 0;width:2px;overflow:hidden;text-overflow:ellipsis;color:#000;">H</div>
<div class="a" style="left:584px;top:319px;width:18px;height:19px;background:linear-gradient(#ffffff,#f2f1ed 25%,#e4e2dc 85%,#d6d4ce);border-top:1px solid #4f6470;box-shadow:inset -2px 0 0 #cfcdc6"></div>
<div class="a" style="left:602px;top:319px;width:534px;height:19px;background:#fff"></div>
<div class="a" style="left:602px;top:319px;width:52px;height:19px;background:#ffa500"></div>
<div class="a" style="left:602px;top:319px;width:534px;height:1px;background:repeating-linear-gradient(90deg,#c4c4c4 0 1px,transparent 1px 2px)"></div>
<div class="a" style="left:602px;top:319px;width:52px;height:1px;background:repeating-linear-gradient(90deg,#fff 0 1px,transparent 1px 2px)"></div>
<div class="a" style="left:653px;top:320px;width:1px;height:18px;background:repeating-linear-gradient(#fff 0 1px,transparent 1px 2px)"></div>
<div class="a" style="left:708px;top:320px;width:1px;height:18px;background:repeating-linear-gradient(#c4c4c4 0 1px,transparent 1px 2px)"></div>
<div class="a" style="left:779px;top:320px;width:1px;height:18px;background:repeating-linear-gradient(#c4c4c4 0 1px,transparent 1px 2px)"></div>
<div class="a" style="left:1129px;top:320px;width:1px;height:18px;background:repeating-linear-gradient(#c4c4c4 0 1px,transparent 1px 2px)"></div>
<div class="a" style="left:621px;top:322px;width:13px;height:13px;background:#fff;border-top:2px solid #555;border-left:2px solid #555;border-right:1px solid #e6e4de;border-bottom:1px solid #e6e4de"></div>
<div class="a t" style="left:658px;top:319.27px;line-height:15px;font-size:11px;transform:scaleY(1.125);transform-origin:0 0;color:#000;">910</div>
<div class="a t" style="left:714px;top:319.27px;line-height:15px;font-size:11px;transform:scaleY(1.125);transform-origin:0 0;color:#000;">Kom1</div>
<div class="a t" style="left:784px;top:319.27px;line-height:15px;font-size:11px;transform:scaleY(1.125);transform-origin:0 0;width:342px;overflow:hidden;text-overflow:ellipsis;color:#000;">Modul für Gelenkrahmen , Quick Lock Anschluss ,   6-polig ,Buchs...</div>
<div class="a t" style="left:1133px;top:319.27px;line-height:15px;font-size:11px;transform:scaleY(1.125);transform-origin:0 0;width:2px;overflow:hidden;text-overflow:ellipsis;color:#000;">H</div>
<div class="a" style="left:584px;top:338px;width:18px;height:19px;background:linear-gradient(#ffffff,#f2f1ed 25%,#e4e2dc 85%,#d6d4ce);border-top:1px solid #4f6470;box-shadow:inset -2px 0 0 #cfcdc6"></div>
<svg class="a" style="left:590px;top:344px" width="6" height="9"><path d="M0 0V9L5.5 4.5Z" fill="#000"/></svg>
<div class="a" style="left:602px;top:338px;width:534px;height:19px;background:#0a246a"></div>
<div class="a" style="left:602px;top:338px;width:534px;height:1px;background:repeating-linear-gradient(90deg,#ffffff 0 1px,transparent 1px 2px)"></div>
<div class="a" style="left:602px;top:338px;width:52px;height:1px;background:repeating-linear-gradient(90deg,#fff 0 1px,transparent 1px 2px)"></div>
<div class="a" style="left:653px;top:339px;width:1px;height:18px;background:repeating-linear-gradient(#ffffff 0 1px,transparent 1px 2px)"></div>
<div class="a" style="left:708px;top:339px;width:1px;height:18px;background:repeating-linear-gradient(#ffffff 0 1px,transparent 1px 2px)"></div>
<div class="a" style="left:779px;top:339px;width:1px;height:18px;background:repeating-linear-gradient(#ffffff 0 1px,transparent 1px 2px)"></div>
<div class="a" style="left:1129px;top:339px;width:1px;height:18px;background:repeating-linear-gradient(#ffffff 0 1px,transparent 1px 2px)"></div>
<div class="a" style="left:621px;top:341px;width:13px;height:13px;background:#fff;border-top:2px solid #555;border-left:2px solid #555;border-right:1px solid #e6e4de;border-bottom:1px solid #e6e4de"></div>
<div class="a t" style="left:658px;top:338.27px;line-height:15px;font-size:11px;transform:scaleY(1.125);transform-origin:0 0;color:#fff;">920</div>
<div class="a t" style="left:714px;top:338.27px;line-height:15px;font-size:11px;transform:scaleY(1.125);transform-origin:0 0;color:#fff;">Kom1</div>
<div class="a t" style="left:784px;top:338.27px;line-height:15px;font-size:11px;transform:scaleY(1.125);transform-origin:0 0;width:342px;overflow:hidden;text-overflow:ellipsis;color:#fff;">Modul für Gelenkrahmen , Quick Lock Anschluss ,   6-polig ,Stiftein...</div>
<div class="a t" style="left:1133px;top:338.27px;line-height:15px;font-size:11px;transform:scaleY(1.125);transform-origin:0 0;width:2px;overflow:hidden;text-overflow:ellipsis;color:#fff;">H</div>
<div class="a" style="left:584px;top:357px;width:18px;height:19px;background:linear-gradient(#ffffff,#f2f1ed 25%,#e4e2dc 85%,#d6d4ce);border-top:1px solid #4f6470;box-shadow:inset -2px 0 0 #cfcdc6"></div>
<div class="a" style="left:602px;top:357px;width:534px;height:19px;background:#fff"></div>
<div class="a" style="left:602px;top:357px;width:52px;height:19px;background:#ffa500"></div>
<div class="a" style="left:602px;top:357px;width:534px;height:1px;background:repeating-linear-gradient(90deg,#c4c4c4 0 1px,transparent 1px 2px)"></div>
<div class="a" style="left:602px;top:357px;width:52px;height:1px;background:repeating-linear-gradient(90deg,#fff 0 1px,transparent 1px 2px)"></div>
<div class="a" style="left:653px;top:358px;width:1px;height:18px;background:repeating-linear-gradient(#fff 0 1px,transparent 1px 2px)"></div>
<div class="a" style="left:708px;top:358px;width:1px;height:18px;background:repeating-linear-gradient(#c4c4c4 0 1px,transparent 1px 2px)"></div>
<div class="a" style="left:779px;top:358px;width:1px;height:18px;background:repeating-linear-gradient(#c4c4c4 0 1px,transparent 1px 2px)"></div>
<div class="a" style="left:1129px;top:358px;width:1px;height:18px;background:repeating-linear-gradient(#c4c4c4 0 1px,transparent 1px 2px)"></div>
<div class="a" style="left:621px;top:360px;width:13px;height:13px;background:#fff;border-top:2px solid #555;border-left:2px solid #555;border-right:1px solid #e6e4de;border-bottom:1px solid #e6e4de"></div>
<div class="a t" style="left:658px;top:357.27px;line-height:15px;font-size:11px;transform:scaleY(1.125);transform-origin:0 0;color:#000;">930</div>
<div class="a t" style="left:714px;top:357.27px;line-height:15px;font-size:11px;transform:scaleY(1.125);transform-origin:0 0;color:#000;">Kom1</div>
<div class="a t" style="left:784px;top:357.27px;line-height:15px;font-size:11px;transform:scaleY(1.125);transform-origin:0 0;width:342px;overflow:hidden;text-overflow:ellipsis;color:#000;">Modul für Gelenkrahmen , Quick Lock Anschluss , 12-polig ,Stiftein...</div>
<div class="a t" style="left:1133px;top:357.27px;line-height:15px;font-size:11px;transform:scaleY(1.125);transform-origin:0 0;width:2px;overflow:hidden;text-overflow:ellipsis;color:#000;">H</div>
<div class="a" style="left:583px;top:373px;width:553px;height:32px;background:#fff"></div>
<div class="a" style="left:583px;top:374px;width:553px;height:1px;background:#a0a0a0"></div>
<div class="a" style="left:583px;top:390px;width:553px;height:1px;background:#a0a0a0"></div>
<div class="a" style="left:583px;top:404px;width:553px;height:1px;background:#a0a0a0"></div>
<div class="a" style="left:583px;top:374px;width:2px;height:32px;background:#a0a0a0"></div>
<div class="a t" style="left:587px;top:374.27px;line-height:15px;font-size:11px;transform:scaleY(1.125);transform-origin:0 0;">Gesamt</div>
<div class="a" style="left:654px;top:391px;width:54px;height:13px;background:#d4d0c8;border-left:1px solid #a0a0a0;border-right:1px solid #a0a0a0"></div>
<div class="a t" style="left:406px;top:389.27px;line-height:15px;font-size:11px;transform:scaleY(1.125);transform-origin:0 0;width:300px;overflow:hidden;text-overflow:ellipsis;text-align:right;">N 118</div>
<div class="a" style="left:1136px;top:143px;width:16px;height:263px;background:conic-gradient(#ffffff 25%,#d4d0c8 0 50%,#ffffff 0 75%,#d4d0c8 0) 0 0/2px 2px"></div>
<div class="a" style="left:1136px;top:143px;width:16px;height:16px;background:#d4d0c8;border-top:1px solid #fff;border-left:1px solid #fff;border-right:1px solid #404040;border-bottom:1px solid #404040;box-shadow:inset -1px -1px 0 #808080;"></div>
<svg class="a" style="left:1140px;top:149px" width="7" height="4"><path d="M0 4H7L3.5 0Z" fill="#000"/></svg>
<div class="a" style="left:1136px;top:390px;width:16px;height:16px;background:#d4d0c8;border-top:1px solid #fff;border-left:1px solid #fff;border-right:1px solid #404040;border-bottom:1px solid #404040;box-shadow:inset -1px -1px 0 #808080;"></div>
<svg class="a" style="left:1140px;top:396px" width="7" height="4"><path d="M0 0H7L3.5 4Z" fill="#000"/></svg>
<div class="a" style="left:1136px;top:320px;width:16px;height:18px;background:#d4d0c8;border-top:1px solid #fff;border-left:1px solid #fff;border-right:1px solid #404040;border-bottom:1px solid #404040;box-shadow:inset -1px -1px 0 #808080;"></div>
<div class="a" style="left:583px;top:406px;width:553px;height:16px;background:conic-gradient(#ffffff 25%,#d4d0c8 0 50%,#ffffff 0 75%,#d4d0c8 0) 0 0/2px 2px"></div>
<div class="a" style="left:583px;top:406px;width:16px;height:16px;background:#d4d0c8;border-top:1px solid #fff;border-left:1px solid #fff;border-right:1px solid #404040;border-bottom:1px solid #404040;box-shadow:inset -1px -1px 0 #808080;"></div>
<svg class="a" style="left:588px;top:410px" width="4" height="7"><path d="M4 0V7L0 3.5Z" fill="#000"/></svg>
<div class="a" style="left:1120px;top:406px;width:16px;height:16px;background:#d4d0c8;border-top:1px solid #fff;border-left:1px solid #fff;border-right:1px solid #404040;border-bottom:1px solid #404040;box-shadow:inset -1px -1px 0 #808080;"></div>
<svg class="a" style="left:1126px;top:410px" width="4" height="7"><path d="M0 0V7L4 3.5Z" fill="#000"/></svg>
<div class="a" style="left:599px;top:406px;width:194px;height:16px;background:#d4d0c8;border-top:1px solid #fff;border-left:1px solid #fff;border-right:1px solid #404040;border-bottom:1px solid #404040;box-shadow:inset -1px -1px 0 #808080;"></div>
<div class="a" style="left:1136px;top:406px;width:16px;height:16px;background:#d4d0c8"></div>
<div class="a" style="left:583px;top:143px;width:1px;height:280px;background:#8a8a8a"></div>
<div class="a" style="left:748px;top:428px;width:5px;height:315px;background:#d4d0c8"></div>
<div class="a" style="left:749px;top:428px;width:1px;height:315px;background:#f0eee8"></div>
<div class="a" style="left:752px;top:428px;width:1px;height:315px;background:#8a8a8a"></div>
<div class="a" style="left:3px;top:428px;width:745px;height:21px;background:#6aa0dc"></div>
<div class="a t" style="left:5px;top:431.03px;line-height:16px;font-size:12px;font-weight:bold;color:#fff;letter-spacing:0.75px;">Materialauswahl</div>
<svg class="a" style="left:732px;top:434px" width="8" height="10"><path d="M2 0.5H6V5.5H2Z" fill="none" stroke="#fff" stroke-width="1"/><rect x="5" y="0" width="1.6" height="6" fill="#fff"/><rect x="0" y="5" width="8" height="1.5" fill="#fff"/><rect x="3.2" y="6" width="1.5" height="4" fill="#fff"/></svg>
<div class="a" style="left:3px;top:449px;width:745px;height:2px;background:#d6d3cc"></div>
<div class="a" style="left:3px;top:451px;width:745px;height:57px;background:linear-gradient(#d0eaf1,#bcdfed)"></div>
<div class="a" style="left:6px;top:455px;width:3px;height:28px;background:repeating-linear-gradient(#8c8c8c 0 1px,transparent 1px 2px)"></div>
<svg class="a" style="left:18px;top:457px" width="24" height="24" viewBox="0 0 24 24"><defs></defs><rect x="0" y="0" width="24" height="24" fill="#4e4e4e"/><rect x="0" y="0" width="24" height="24" fill="url(#ig)"/><path d="M4 10.5C5 6.5 9 4.8 14.5 5.2L14.2 1.8L21 8.2L14 12.6L14.3 9.2C9.5 8.6 6 9 4 10.5Z" fill="#fff"/><path d="M20 13.5C19 17.5 15 19.2 9.5 18.8L9.8 22.2L3 15.8L10 11.4L9.7 14.8C14.5 15.4 18 15 20 13.5Z" fill="#fff"/></svg>
<div class="a" style="left:49px;top:452px;width:1px;height:34px;background:#9b9b9b"></div>
<div class="a t" style="left:60px;top:461.86px;line-height:15px;font-size:11px;">Markierung</div>
<svg class="a" style="left:116px;top:465px" width="14" height="8"><path d="M0 0H13.5L6.75 7Z" fill="#000"/></svg>
<div class="a" style="left:137px;top:452px;width:1px;height:34px;background:#9b9b9b"></div>
<svg class="a" style="left:146px;top:457px" width="24" height="24" viewBox="0 0 24 24"><defs></defs><rect x="0" y="0" width="24" height="24" fill="#4e4e4e"/><rect x="0" y="0" width="24" height="24" fill="url(#ig)"/><g fill="none" stroke="#fff" stroke-width="1.5"><rect x="3.5" y="4.2" width="10" height="4" rx="1.2"/><rect x="10.7" y="10.5" width="9.6" height="4" rx="1.2"/><rect x="10.7" y="15.7" width="9.6" height="4" rx="1.2"/><path d="M6 8.2V17.7H10.7M6 12.5H10.7"/></g></svg>
<svg class="a" style="left:180px;top:457px" width="24" height="24" viewBox="0 0 24 24"><defs></defs><rect x="0" y="0" width="24" height="24" fill="#4e4e4e"/><rect x="0" y="0" width="24" height="24" fill="url(#ig)"/><circle cx="9.6" cy="8.6" r="4.6" fill="none" stroke="#fff" stroke-width="2.3"/><path d="M13 12L19 18" stroke="#fff" stroke-width="3.2" stroke-linecap="round"/></svg>
<div class="a" style="left:211px;top:452px;width:1px;height:34px;background:#9b9b9b"></div>
<svg class="a" style="left:215px;top:454px" width="32" height="32">
<path d="M12 4.3L19 5L18.9 5.8L12 5.3Z" fill="#111"/>
<path d="M7.2 7.6L20.8 8L18.7 16.2L8.5 14.8Z" fill="none" stroke="#eea21a" stroke-width="1.6"/>
<path d="M10.7 9.4L18.9 10L18.3 13.3L10.3 12.5Z" fill="#111"/>
<path d="M23.2 18.5L22 9L27 6" fill="none" stroke="#111" stroke-width="1.8"/>
<path d="M8.8 18.9H24" stroke="#111" stroke-width="2"/>
<circle cx="10.3" cy="23.3" r="2.3" fill="#111"/><circle cx="22.3" cy="23.3" r="2.3" fill="#111"/>
</svg>
<div class="a t" style="left:252px;top:461.86px;line-height:15px;font-size:11px;">Material zuweisen</div>
<div class="a" style="left:6px;top:489px;width:3px;height:16px;background:repeating-linear-gradient(#8c8c8c 0 1px,transparent 1px 2px)"></div>
<div class="a t" style="left:17px;top:489.86px;line-height:15px;font-size:11px;">Filtern bei</div>
<div class="a" style="left:72px;top:487px;width:124px;height:20px;background:#eef2fd;border:1px solid #a8c3e6"></div>
<div class="a t" style="left:74px;top:490.86px;line-height:15px;font-size:11px;">Hersteller</div>
<svg class="a" style="left:184px;top:496px" width="9" height="5"><path d="M0 0H9L4.5 4.5Z" fill="#4a7cc0"/></svg>
<div class="a" style="left:198px;top:487px;width:273px;height:20px;background:#eee8aa;border:1px solid #a8c3e6"></div>
<div class="a" style="left:457px;top:488px;width:13px;height:18px;background:#eef2fd"></div>
<svg class="a" style="left:459px;top:496px" width="9" height="5"><path d="M0 0H9L4.5 4.5Z" fill="#4a7cc0"/></svg>
<div class="a" style="left:199px;top:488px;width:36px;height:18px;background:#eef2fd"></div>
<svg class="a" style="left:200px;top:489px" width="16" height="16" viewBox="0 0 24 24"><rect width="24" height="24" fill="#4e4e4e"/><path d="M4 10.5C5 6.5 9 4.8 14.5 5.2L14.2 1.8L21 8.2L14 12.6L14.3 9.2C9.5 8.6 6 9 4 10.5Z" fill="#fff"/><path d="M20 13.5C19 17.5 15 19.2 9.5 18.8L9.8 22.2L3 15.8L10 11.4L9.7 14.8C14.5 15.4 18 15 20 13.5Z" fill="#fff"/></svg>
<svg class="a" style="left:218px;top:489px" width="16" height="16" viewBox="0 0 24 24"><rect width="24" height="24" fill="#4e4e4e"/><rect x="8.3" y="3.2" width="6.7" height="3" fill="#fff"/><rect x="9.6" y="4.4" width="4.2" height="1.2" fill="#4a4a4a"/><rect x="4.6" y="6" width="14.9" height="3" fill="#fff"/><rect x="6" y="10.3" width="12" height="10.4" fill="#fff"/><rect x="9" y="12" width="2" height="7.5" fill="#4a4a4a"/><rect x="13" y="12" width="2" height="7.5" fill="#4a4a4a"/></svg>
<div class="a t" style="left:237px;top:490.86px;line-height:15px;font-size:11px;">HARTING</div>
<div class="a" style="left:3px;top:508px;width:745px;height:235px;background:#fff"></div>
<div class="a" style="left:3px;top:508px;width:86px;height:24px;background:linear-gradient(#fefefe,#f1f0ec 45%,#e2e0d9 82%,#d0cdc5);border-right:1px solid #4f6470;box-shadow:inset -2px 0 0 #c9c7c0,inset 1px 0 0 #fff"></div>
<svg class="a" style="left:77px;top:518px" width="10" height="7"><rect x="0" y="3" width="3" height="1" fill="#000"/><rect x="3" y="0" width="1.5" height="7" fill="#000"/><path d="M4.5 1.5H9.5V5.5H4.5" fill="none" stroke="#000" stroke-width="1"/><rect x="4" y="4.5" width="6" height="1.5" fill="#000"/></svg>
<div class="a" style="left:89px;top:508px;width:98px;height:24px;background:linear-gradient(#fefefe,#f1f0ec 45%,#e2e0d9 82%,#d0cdc5);border-right:1px solid #4f6470;box-shadow:inset -2px 0 0 #c9c7c0,inset 1px 0 0 #fff"></div>
<div class="a t" style="left:93px;top:513.27px;line-height:15px;font-size:11px;transform:scaleY(1.125);transform-origin:0 0;">Hersteller</div>
<svg class="a" style="left:175px;top:518px" width="10" height="7"><rect x="0" y="3" width="3" height="1" fill="#000"/><rect x="3" y="0" width="1.5" height="7" fill="#000"/><path d="M4.5 1.5H9.5V5.5H4.5" fill="none" stroke="#000" stroke-width="1"/><rect x="4" y="4.5" width="6" height="1.5" fill="#000"/></svg>
<div class="a" style="left:187px;top:508px;width:220px;height:24px;background:linear-gradient(#fefefe,#f1f0ec 45%,#e2e0d9 82%,#d0cdc5);border-right:1px solid #4f6470;box-shadow:inset -2px 0 0 #c9c7c0,inset 1px 0 0 #fff"></div>
<div class="a t" style="left:191px;top:513.27px;line-height:15px;font-size:11px;transform:scaleY(1.125);transform-origin:0 0;">Materialname</div>
<svg class="a" style="left:395px;top:518px" width="10" height="7"><rect x="0" y="3" width="3" height="1" fill="#000"/><rect x="3" y="0" width="1.5" height="7" fill="#000"/><path d="M4.5 1.5H9.5V5.5H4.5" fill="none" stroke="#000" stroke-width="1"/><rect x="4" y="4.5" width="6" height="1.5" fill="#000"/></svg>
<svg class="a" style="left:380px;top:515px" width="8" height="7"><path d="M0.5 6.5H7.5L4 0.5Z" fill="none" stroke="#c8c8c8"/></svg>
<div class="a" style="left:407px;top:508px;width:237px;height:24px;background:linear-gradient(#fefefe,#f1f0ec 45%,#e2e0d9 82%,#d0cdc5);border-right:1px solid #4f6470;box-shadow:inset -2px 0 0 #c9c7c0,inset 1px 0 0 #fff"></div>
<div class="a t" style="left:411px;top:513.27px;line-height:15px;font-size:11px;transform:scaleY(1.125);transform-origin:0 0;">Materialbeschreibung</div>
<svg class="a" style="left:632px;top:518px" width="10" height="7"><rect x="0" y="3" width="3" height="1" fill="#000"/><rect x="3" y="0" width="1.5" height="7" fill="#000"/><path d="M4.5 1.5H9.5V5.5H4.5" fill="none" stroke="#000" stroke-width="1"/><rect x="4" y="4.5" width="6" height="1.5" fill="#000"/></svg>
<div class="a" style="left:644px;top:508px;width:88px;height:24px;background:linear-gradient(#fefefe,#f1f0ec 45%,#e2e0d9 82%,#d0cdc5);border-right:1px solid #4f6470;box-shadow:inset -2px 0 0 #c9c7c0,inset 1px 0 0 #fff"></div>
<div class="a t" style="left:646px;top:513.27px;line-height:15px;font-size:11px;transform:scaleY(1.125);transform-origin:0 0;">Bestell-Nr.</div>
<div class="a" style="left:3px;top:532px;width:728px;height:1px;background:#4f6470"></div>
<div class="a" style="left:3px;top:508px;width:744px;height:1px;background:#8a8a8a"></div>
<div class="a" style="left:2px;top:508px;width:1px;height:235px;background:#808080"></div>
<div class="a" style="left:3px;top:508px;width:1px;height:235px;background:#a0a0a0"></div>
<div class="a" style="left:4px;top:533px;width:33px;height:18px;background:linear-gradient(#ffffff,#f2f1ed 25%,#e4e2dc 85%,#d6d4ce);box-shadow:inset -2px 0 0 #cfcdc6"></div>
<div class="a" style="left:4px;top:551px;width:33px;height:1px;background:#4f6470"></div>
<svg class="a" style="left:15px;top:537px" width="12" height="12"><rect x="0.5" y="0.5" width="11" height="11" fill="#fff" stroke="#1c2a78" stroke-width="1.2"/><path d="M2 2H10L7 6V10H5V6Z" fill="none" stroke="#6070d0" stroke-width="0.9"/><path d="M1 11L11 1" stroke="#1c2a78" stroke-width="1.2"/></svg>
<div class="a" style="left:37px;top:533px;width:51px;height:18px;background:#ffa500"></div>
<div class="a" style="left:37px;top:551px;width:694px;height:1px;background:repeating-linear-gradient(90deg,#c4c4c4 0 1px,transparent 1px 2px)"></div>
<svg class="a" style="left:92px;top:536px" width="12" height="12"><rect x="0.5" y="0.5" width="11" height="11" fill="#fff" stroke="#5a5ad0"/><path d="M2.5 10L6 2L9.5 10M4 7H8" fill="none" stroke="#5a5ad0" stroke-width="1.2"/></svg>
<div class="a" style="left:106px;top:532px;width:1px;height:19px;background:repeating-linear-gradient(#c4c4c4 0 1px,transparent 1px 2px)"></div>
<svg class="a" style="left:190px;top:536px" width="12" height="12"><rect x="0.5" y="0.5" width="11" height="11" fill="#fff" stroke="#5a5ad0"/><path d="M2.5 10L6 2L9.5 10M4 7H8" fill="none" stroke="#5a5ad0" stroke-width="1.2"/></svg>
<div class="a" style="left:204px;top:532px;width:1px;height:19px;background:repeating-linear-gradient(#c4c4c4 0 1px,transparent 1px 2px)"></div>
<svg class="a" style="left:410px;top:536px" width="12" height="12"><rect x="0.5" y="0.5" width="11" height="11" fill="#fff" stroke="#5a5ad0"/><path d="M2.5 10L6 2L9.5 10M4 7H8" fill="none" stroke="#5a5ad0" stroke-width="1.2"/></svg>
<div class="a" style="left:424px;top:532px;width:1px;height:19px;background:repeating-linear-gradient(#c4c4c4 0 1px,transparent 1px 2px)"></div>
<svg class="a" style="left:647px;top:536px" width="12" height="12"><rect x="0.5" y="0.5" width="11" height="11" fill="#fff" stroke="#5a5ad0"/><path d="M2.5 10L6 2L9.5 10M4 7H8" fill="none" stroke="#5a5ad0" stroke-width="1.2"/></svg>
<div class="a" style="left:661px;top:532px;width:1px;height:19px;background:repeating-linear-gradient(#c4c4c4 0 1px,transparent 1px 2px)"></div>
<div class="a" style="left:3px;top:552px;width:728px;height:19px;background:linear-gradient(90deg,#d8d6d2,#a4a2a2)"></div>
<div class="a" style="left:6px;top:557px;width:11px;height:11px;background:#d4d0c8;border-top:1px solid #fff;border-left:1px solid #fff;border-right:1px solid #404040;border-bottom:1px solid #404040"></div>
<div class="a" style="left:8px;top:562px;width:7px;height:1px;background:#000"></div>
<div class="a t" style="left:21px;top:554.27px;line-height:15px;font-size:11px;transform:scaleY(1.125);transform-origin:0 0;">Materialtyp : Steckverbinder (124 items)</div>
<div class="a" style="left:20px;top:572px;width:17px;height:19px;background:linear-gradient(#ffffff,#f2f1ed 25%,#e4e2dc 85%,#d6d4ce);border-top:1px solid #4f6470;box-shadow:inset -2px 0 0 #cfcdc6"></div>
<div class="a" style="left:20px;top:572px;width:17px;height:1px;background:#f4f3ef"></div>
<div class="a" style="left:37px;top:572px;width:51px;height:19px;background:#ffa500"></div>
<div class="a" style="left:37px;top:572px;width:694px;height:1px;background:repeating-linear-gradient(90deg,#c4c4c4 0 1px,transparent 1px 2px)"></div>
<div class="a" style="left:37px;top:572px;width:51px;height:1px;background:repeating-linear-gradient(90deg,#fff 0 1px,transparent 1px 2px)"></div>
<div class="a" style="left:88px;top:573px;width:1px;height:18px;background:repeating-linear-gradient(#fff 0 1px,transparent 1px 2px)"></div>
<div class="a" style="left:186px;top:573px;width:1px;height:18px;background:repeating-linear-gradient(#c4c4c4 0 1px,transparent 1px 2px)"></div>
<div class="a" style="left:406px;top:573px;width:1px;height:18px;background:repeating-linear-gradient(#c4c4c4 0 1px,transparent 1px 2px)"></div>
<div class="a" style="left:643px;top:573px;width:1px;height:18px;background:repeating-linear-gradient(#c4c4c4 0 1px,transparent 1px 2px)"></div>
<div class="a" style="left:56px;top:575px;width:13px;height:13px;background:#fff;border-top:2px solid #555;border-left:2px solid #555;border-right:1px solid #e6e4de;border-bottom:1px solid #e6e4de"></div>
<div class="a t" style="left:92px;top:572.27px;line-height:15px;font-size:11px;transform:scaleY(1.125);transform-origin:0 0;color:#000;">HARTING</div>
<div class="a t" style="left:190px;top:572.27px;line-height:15px;font-size:11px;transform:scaleY(1.125);transform-origin:0 0;width:212px;overflow:hidden;text-overflow:ellipsis;color:#000;">Han   3A ,  Buchseneinsatz , 3pol + PE ,...</div>
<div class="a t" style="left:411px;top:572.27px;line-height:15px;font-size:11px;transform:scaleY(1.125);transform-origin:0 0;width:230px;overflow:hidden;text-overflow:ellipsis;color:#000;">passt in Baugröße   3A | Quick Lock Anschlu...</div>
<div class="a t" style="left:648px;top:572.27px;line-height:15px;font-size:11px;transform:scaleY(1.125);transform-origin:0 0;">09200032733</div>
<div class="a" style="left:20px;top:591px;width:17px;height:19px;background:linear-gradient(#ffffff,#f2f1ed 25%,#e4e2dc 85%,#d6d4ce);border-top:1px solid #4f6470;box-shadow:inset -2px 0 0 #cfcdc6"></div>
<div class="a" style="left:37px;top:591px;width:51px;height:19px;background:#ffa500"></div>
<div class="a" style="left:37px;top:591px;width:694px;height:1px;background:repeating-linear-gradient(90deg,#c4c4c4 0 1px,transparent 1px 2px)"></div>
<div class="a" style="left:37px;top:591px;width:51px;height:1px;background:repeating-linear-gradient(90deg,#fff 0 1px,transparent 1px 2px)"></div>
<div class="a" style="left:88px;top:592px;width:1px;height:18px;background:repeating-linear-gradient(#fff 0 1px,transparent 1px 2px)"></div>
<div class="a" style="left:186px;top:592px;width:1px;height:18px;background:repeating-linear-gradient(#c4c4c4 0 1px,transparent 1px 2px)"></div>
<div class="a" style="left:406px;top:592px;width:1px;height:18px;background:repeating-linear-gradient(#c4c4c4 0 1px,transparent 1px 2px)"></div>
<div class="a" style="left:643px;top:592px;width:1px;height:18px;background:repeating-linear-gradient(#c4c4c4 0 1px,transparent 1px 2px)"></div>
<div class="a" style="left:56px;top:594px;width:13px;height:13px;background:#fff;border-top:2px solid #555;border-left:2px solid #555;border-right:1px solid #e6e4de;border-bottom:1px solid #e6e4de"></div>
<div class="a t" style="left:92px;top:591.27px;line-height:15px;font-size:11px;transform:scaleY(1.125);transform-origin:0 0;color:#000;">HARTING</div>
<div class="a t" style="left:190px;top:591.27px;line-height:15px;font-size:11px;transform:scaleY(1.125);transform-origin:0 0;width:212px;overflow:hidden;text-overflow:ellipsis;color:#000;">Han   3A ,  Buchseneinsatz , 3pol + PE ,...</div>
<div class="a t" style="left:411px;top:591.27px;line-height:15px;font-size:11px;transform:scaleY(1.125);transform-origin:0 0;width:230px;overflow:hidden;text-overflow:ellipsis;color:#000;">passt in Baugröße  3A | Schraubanschluss</div>
<div class="a t" style="left:648px;top:591.27px;line-height:15px;font-size:11px;transform:scaleY(1.125);transform-origin:0 0;">09200032711</div>
<div class="a" style="left:20px;top:610px;width:17px;height:19px;background:linear-gradient(#ffffff,#f2f1ed 25%,#e4e2dc 85%,#d6d4ce);border-top:1px solid #4f6470;box-shadow:inset -2px 0 0 #cfcdc6"></div>
<div class="a" style="left:37px;top:610px;width:51px;height:19px;background:#ffa500"></div>
<div class="a" style="left:37px;top:610px;width:694px;height:1px;background:repeating-linear-gradient(90deg,#c4c4c4 0 1px,transparent 1px 2px)"></div>
<div class="a" style="left:37px;top:610px;width:51px;height:1px;background:repeating-linear-gradient(90deg,#fff 0 1px,transparent 1px 2px)"></div>
<div class="a" style="left:88px;top:611px;width:1px;height:18px;background:repeating-linear-gradient(#fff 0 1px,transparent 1px 2px)"></div>
<div class="a" style="left:186px;top:611px;width:1px;height:18px;background:repeating-linear-gradient(#c4c4c4 0 1px,transparent 1px 2px)"></div>
<div class="a" style="left:406px;top:611px;width:1px;height:18px;background:repeating-linear-gradient(#c4c4c4 0 1px,transparent 1px 2px)"></div>
<div class="a" style="left:643px;top:611px;width:1px;height:18px;background:repeating-linear-gradient(#c4c4c4 0 1px,transparent 1px 2px)"></div>
<div class="a" style="left:56px;top:613px;width:13px;height:13px;background:#fff;border-top:2px solid #555;border-left:2px solid #555;border-right:1px solid #e6e4de;border-bottom:1px solid #e6e4de"></div>
<div class="a t" style="left:92px;top:610.27px;line-height:15px;font-size:11px;transform:scaleY(1.125);transform-origin:0 0;color:#000;">HARTING</div>
<div class="a t" style="left:190px;top:610.27px;line-height:15px;font-size:11px;transform:scaleY(1.125);transform-origin:0 0;width:212px;overflow:hidden;text-overflow:ellipsis;color:#000;">Han   3A ,  Buchseneinsatz , 4pol + PE ,...</div>
<div class="a t" style="left:411px;top:610.27px;line-height:15px;font-size:11px;transform:scaleY(1.125);transform-origin:0 0;width:230px;overflow:hidden;text-overflow:ellipsis;color:#000;">passt in Baugröße  3A | Schraubanschluss</div>
<div class="a t" style="left:648px;top:610.27px;line-height:15px;font-size:11px;transform:scaleY(1.125);transform-origin:0 0;">09200042711</div>
<div class="a" style="left:20px;top:629px;width:17px;height:19px;background:linear-gradient(#ffffff,#f2f1ed 25%,#e4e2dc 85%,#d6d4ce);border-top:1px solid #4f6470;box-shadow:inset -2px 0 0 #cfcdc6"></div>
<div class="a" style="left:37px;top:629px;width:51px;height:19px;background:#ffa500"></div>
<div class="a" style="left:37px;top:629px;width:694px;height:1px;background:repeating-linear-gradient(90deg,#c4c4c4 0 1px,transparent 1px 2px)"></div>
<div class="a" style="left:37px;top:629px;width:51px;height:1px;background:repeating-linear-gradient(90deg,#fff 0 1px,transparent 1px 2px)"></div>
<div class="a" style="left:88px;top:630px;width:1px;height:18px;background:repeating-linear-gradient(#fff 0 1px,transparent 1px 2px)"></div>
<div class="a" style="left:186px;top:630px;width:1px;height:18px;background:repeating-linear-gradient(#c4c4c4 0 1px,transparent 1px 2px)"></div>
<div class="a" style="left:406px;top:630px;width:1px;height:18px;background:repeating-linear-gradient(#c4c4c4 0 1px,transparent 1px 2px)"></div>
<div class="a" style="left:643px;top:630px;width:1px;height:18px;background:repeating-linear-gradient(#c4c4c4 0 1px,transparent 1px 2px)"></div>
<div class="a" style="left:56px;top:632px;width:13px;height:13px;background:#fff;border-top:2px solid #555;border-left:2px solid #555;border-right:1px solid #e6e4de;border-bottom:1px solid #e6e4de"></div>
<div class="a t" style="left:92px;top:629.27px;line-height:15px;font-size:11px;transform:scaleY(1.125);transform-origin:0 0;color:#000;">HARTING</div>
<div class="a t" style="left:190px;top:629.27px;line-height:15px;font-size:11px;transform:scaleY(1.125);transform-origin:0 0;width:212px;overflow:hidden;text-overflow:ellipsis;color:#000;">Han   3A ,  Buchseneinsatz , 4pol + PE ,...</div>
<div class="a t" style="left:411px;top:629.27px;line-height:15px;font-size:11px;transform:scaleY(1.125);transform-origin:0 0;width:230px;overflow:hidden;text-overflow:ellipsis;color:#000;">passt in Baugröße   3A | Quick Lock Anschlu...</div>
<div class="a t" style="left:648px;top:629.27px;line-height:15px;font-size:11px;transform:scaleY(1.125);transform-origin:0 0;">09200042733</div>
<div class="a" style="left:20px;top:648px;width:17px;height:19px;background:linear-gradient(#ffffff,#f2f1ed 25%,#e4e2dc 85%,#d6d4ce);border-top:1px solid #4f6470;box-shadow:inset -2px 0 0 #cfcdc6"></div>
<div class="a" style="left:37px;top:648px;width:51px;height:19px;background:#ffa500"></div>
<div class="a" style="left:37px;top:648px;width:694px;height:1px;background:repeating-linear-gradient(90deg,#c4c4c4 0 1px,transparent 1px 2px)"></div>
<div class="a" style="left:37px;top:648px;width:51px;height:1px;background:repeating-linear-gradient(90deg,#fff 0 1px,transparent 1px 2px)"></div>
<div class="a" style="left:88px;top:649px;width:1px;height:18px;background:repeating-linear-gradient(#fff 0 1px,transparent 1px 2px)"></div>
<div class="a" style="left:186px;top:649px;width:1px;height:18px;background:repeating-linear-gradient(#c4c4c4 0 1px,transparent 1px 2px)"></div>
<div class="a" style="left:406px;top:649px;width:1px;height:18px;background:repeating-linear-gradient(#c4c4c4 0 1px,transparent 1px 2px)"></div>
<div class="a" style="left:643px;top:649px;width:1px;height:18px;background:repeating-linear-gradient(#c4c4c4 0 1px,transparent 1px 2px)"></div>
<div class="a" style="left:56px;top:651px;width:13px;height:13px;background:#fff;border-top:2px solid #555;border-left:2px solid #555;border-right:1px solid #e6e4de;border-bottom:1px solid #e6e4de"></div>
<div class="a t" style="left:92px;top:648.27px;line-height:15px;font-size:11px;transform:scaleY(1.125);transform-origin:0 0;color:#000;">HARTING</div>
<div class="a t" style="left:190px;top:648.27px;line-height:15px;font-size:11px;transform:scaleY(1.125);transform-origin:0 0;width:212px;overflow:hidden;text-overflow:ellipsis;color:#000;">Han   3A ,  Stifteinsatz , 3pol + PE , 230/...</div>
<div class="a t" style="left:411px;top:648.27px;line-height:15px;font-size:11px;transform:scaleY(1.125);transform-origin:0 0;width:230px;overflow:hidden;text-overflow:ellipsis;color:#000;">passt in Baugröße  3A | Schraubanschluss</div>
<div class="a t" style="left:648px;top:648.27px;line-height:15px;font-size:11px;transform:scaleY(1.125);transform-origin:0 0;">09200032611</div>
<div class="a" style="left:20px;top:667px;width:17px;height:19px;background:linear-gradient(#ffffff,#f2f1ed 25%,#e4e2dc 85%,#d6d4ce);border-top:1px solid #4f6470;box-shadow:inset -2px 0 0 #cfcdc6"></div>
<svg class="a" style="left:25px;top:673px" width="6" height="9"><path d="M0 0V9L5.5 4.5Z" fill="#000"/></svg>
<div class="a" style="left:37px;top:667px;width:607px;height:19px;background:#0a246a"></div>
<div class="a" style="left:644px;top:667px;width:87px;height:20px;background:#fff;border-top:1px solid #a0a0a0;border-bottom:1px solid #a0a0a0"></div>
<div class="a" style="left:37px;top:667px;width:694px;height:1px;background:repeating-linear-gradient(90deg,#fff 0 1px,transparent 1px 2px)"></div>
<div class="a" style="left:37px;top:667px;width:51px;height:1px;background:repeating-linear-gradient(90deg,#fff 0 1px,transparent 1px 2px)"></div>
<div class="a" style="left:88px;top:668px;width:1px;height:18px;background:repeating-linear-gradient(#fff 0 1px,transparent 1px 2px)"></div>
<div class="a" style="left:186px;top:668px;width:1px;height:18px;background:repeating-linear-gradient(#fff 0 1px,transparent 1px 2px)"></div>
<div class="a" style="left:406px;top:668px;width:1px;height:18px;background:repeating-linear-gradient(#fff 0 1px,transparent 1px 2px)"></div>
<div class="a" style="left:643px;top:668px;width:1px;height:18px;background:repeating-linear-gradient(#fff 0 1px,transparent 1px 2px)"></div>
<div class="a" style="left:56px;top:670px;width:13px;height:13px;background:#fff;border-top:2px solid #555;border-left:2px solid #555;border-right:1px solid #e6e4de;border-bottom:1px solid #e6e4de"></div>
<div class="a t" style="left:92px;top:667.27px;line-height:15px;font-size:11px;transform:scaleY(1.125);transform-origin:0 0;color:#fff;">HARTING</div>
<div class="a t" style="left:190px;top:667.27px;line-height:15px;font-size:11px;transform:scaleY(1.125);transform-origin:0 0;width:212px;overflow:hidden;text-overflow:ellipsis;color:#fff;">Han   3A ,  Stifteinsatz , 3pol + PE , 230/...</div>
<div class="a t" style="left:411px;top:667.27px;line-height:15px;font-size:11px;transform:scaleY(1.125);transform-origin:0 0;width:230px;overflow:hidden;text-overflow:ellipsis;color:#fff;">passt in Baugröße   3A | Quick Lock Anschlu...</div>
<div class="a t" style="left:648px;top:667.27px;line-height:15px;font-size:11px;transform:scaleY(1.125);transform-origin:0 0;">09200032633</div>
<div class="a" style="left:20px;top:686px;width:17px;height:19px;background:linear-gradient(#ffffff,#f2f1ed 25%,#e4e2dc 85%,#d6d4ce);border-top:1px solid #4f6470;box-shadow:inset -2px 0 0 #cfcdc6"></div>
<div class="a" style="left:37px;top:686px;width:51px;height:19px;background:#ffa500"></div>
<div class="a" style="left:37px;top:686px;width:694px;height:1px;background:repeating-linear-gradient(90deg,#c4c4c4 0 1px,transparent 1px 2px)"></div>
<div class="a" style="left:37px;top:686px;width:51px;height:1px;background:repeating-linear-gradient(90deg,#fff 0 1px,transparent 1px 2px)"></div>
<div class="a" style="left:88px;top:687px;width:1px;height:18px;background:repeating-linear-gradient(#fff 0 1px,transparent 1px 2px)"></div>
<div class="a" style="left:186px;top:687px;width:1px;height:18px;background:repeating-linear-gradient(#c4c4c4 0 1px,transparent 1px 2px)"></div>
<div class="a" style="left:406px;top:687px;width:1px;height:18px;background:repeating-linear-gradient(#c4c4c4 0 1px,transparent 1px 2px)"></div>
<div class="a" style="left:643px;top:687px;width:1px;height:18px;background:repeating-linear-gradient(#c4c4c4 0 1px,transparent 1px 2px)"></div>
<div class="a" style="left:56px;top:689px;width:13px;height:13px;background:#fff;border-top:2px solid #555;border-left:2px solid #555;border-right:1px solid #e6e4de;border-bottom:1px solid #e6e4de"></div>
<div class="a t" style="left:92px;top:686.27px;line-height:15px;font-size:11px;transform:scaleY(1.125);transform-origin:0 0;color:#000;">HARTING</div>
<div class="a t" style="left:190px;top:686.27px;line-height:15px;font-size:11px;transform:scaleY(1.125);transform-origin:0 0;width:212px;overflow:hidden;text-overflow:ellipsis;color:#000;">Han   3A ,  Stifteinsatz , 4pol + PE , 230/...</div>
<div class="a t" style="left:411px;top:686.27px;line-height:15px;font-size:11px;transform:scaleY(1.125);transform-origin:0 0;width:230px;overflow:hidden;text-overflow:ellipsis;color:#000;">passt in Baugröße  3A | Schraubanschluss</div>
<div class="a t" style="left:648px;top:686.27px;line-height:15px;font-size:11px;transform:scaleY(1.125);transform-origin:0 0;">09200042611</div>
<div class="a" style="left:20px;top:705px;width:17px;height:19px;background:linear-gradient(#ffffff,#f2f1ed 25%,#e4e2dc 85%,#d6d4ce);border-top:1px solid #4f6470;box-shadow:inset -2px 0 0 #cfcdc6"></div>
<div class="a" style="left:37px;top:705px;width:51px;height:19px;background:#ffa500"></div>
<div class="a" style="left:37px;top:705px;width:694px;height:1px;background:repeating-linear-gradient(90deg,#c4c4c4 0 1px,transparent 1px 2px)"></div>
<div class="a" style="left:37px;top:705px;width:51px;height:1px;background:repeating-linear-gradient(90deg,#fff 0 1px,transparent 1px 2px)"></div>
<div class="a" style="left:88px;top:706px;width:1px;height:18px;background:repeating-linear-gradient(#fff 0 1px,transparent 1px 2px)"></div>
<div class="a" style="left:186px;top:706px;width:1px;height:18px;background:repeating-linear-gradient(#c4c4c4 0 1px,transparent 1px 2px)"></div>
<div class="a" style="left:406px;top:706px;width:1px;height:18px;background:repeating-linear-gradient(#c4c4c4 0 1px,transparent 1px 2px)"></div>
<div class="a" style="left:643px;top:706px;width:1px;height:18px;background:repeating-linear-gradient(#c4c4c4 0 1px,transparent 1px 2px)"></div>
<div class="a" style="left:56px;top:708px;width:13px;height:13px;background:#fff;border-top:2px solid #555;border-left:2px solid #555;border-right:1px solid #e6e4de;border-bottom:1px solid #e6e4de"></div>
<div class="a t" style="left:92px;top:705.27px;line-height:15px;font-size:11px;transform:scaleY(1.125);transform-origin:0 0;color:#000;">HARTING</div>
<div class="a t" style="left:190px;top:705.27px;line-height:15px;font-size:11px;transform:scaleY(1.125);transform-origin:0 0;width:212px;overflow:hidden;text-overflow:ellipsis;color:#000;">Han   3A ,  Stifteinsatz , 4pol + PE , 230/...</div>
<div class="a t" style="left:411px;top:705.27px;line-height:15px;font-size:11px;transform:scaleY(1.125);transform-origin:0 0;width:230px;overflow:hidden;text-overflow:ellipsis;color:#000;">passt in Baugröße   3A | Quick Lock Anschlu...</div>
<div class="a t" style="left:648px;top:705.27px;line-height:15px;font-size:11px;transform:scaleY(1.125);transform-origin:0 0;">09200042633</div>
<div class="a" style="left:20px;top:724px;width:17px;height:19px;background:linear-gradient(#ffffff,#f2f1ed 25%,#e4e2dc 85%,#d6d4ce);border-top:1px solid #4f6470;box-shadow:inset -2px 0 0 #cfcdc6"></div>
<div class="a" style="left:37px;top:724px;width:51px;height:19px;background:#ffa500"></div>
<div class="a" style="left:37px;top:724px;width:694px;height:1px;background:repeating-linear-gradient(90deg,#c4c4c4 0 1px,transparent 1px 2px)"></div>
<div class="a" style="left:37px;top:724px;width:51px;height:1px;background:repeating-linear-gradient(90deg,#fff 0 1px,transparent 1px 2px)"></div>
<div class="a" style="left:88px;top:725px;width:1px;height:18px;background:repeating-linear-gradient(#fff 0 1px,transparent 1px 2px)"></div>
<div class="a" style="left:186px;top:725px;width:1px;height:18px;background:repeating-linear-gradient(#c4c4c4 0 1px,transparent 1px 2px)"></div>
<div class="a" style="left:406px;top:725px;width:1px;height:18px;background:repeating-linear-gradient(#c4c4c4 0 1px,transparent 1px 2px)"></div>
<div class="a" style="left:643px;top:725px;width:1px;height:18px;background:repeating-linear-gradient(#c4c4c4 0 1px,transparent 1px 2px)"></div>
<div class="a" style="left:56px;top:727px;width:13px;height:13px;background:#fff;border-top:2px solid #555;border-left:2px solid #555;border-right:1px solid #e6e4de;border-bottom:1px solid #e6e4de"></div>
<div class="a t" style="left:92px;top:724.27px;line-height:15px;font-size:11px;transform:scaleY(1.125);transform-origin:0 0;color:#000;">HARTING</div>
<div class="a t" style="left:190px;top:724.27px;line-height:15px;font-size:11px;transform:scaleY(1.125);transform-origin:0 0;width:212px;overflow:hidden;text-overflow:ellipsis;color:#000;"></div>
<div class="a t" style="left:411px;top:724.27px;line-height:15px;font-size:11px;transform:scaleY(1.125);transform-origin:0 0;width:230px;overflow:hidden;text-overflow:ellipsis;color:#000;"></div>
<div class="a t" style="left:648px;top:724.27px;line-height:15px;font-size:11px;transform:scaleY(1.125);transform-origin:0 0;"></div>
<div class="a" style="left:731px;top:508px;width:16px;height:219px;background:conic-gradient(#ffffff 25%,#d4d0c8 0 50%,#ffffff 0 75%,#d4d0c8 0) 0 0/2px 2px"></div>
<div class="a" style="left:731px;top:508px;width:16px;height:16px;background:#d4d0c8;border-top:1px solid #fff;border-left:1px solid #fff;border-right:1px solid #404040;border-bottom:1px solid #404040;box-shadow:inset -1px -1px 0 #808080;"></div>
<svg class="a" style="left:735px;top:514px" width="7" height="4"><path d="M0 4H7L3.5 0Z" fill="#000"/></svg>
<div class="a" style="left:731px;top:711px;width:16px;height:16px;background:#d4d0c8;border-top:1px solid #fff;border-left:1px solid #fff;border-right:1px solid #404040;border-bottom:1px solid #404040;box-shadow:inset -1px -1px 0 #808080;"></div>
<svg class="a" style="left:735px;top:717px" width="7" height="4"><path d="M0 0H7L3.5 4Z" fill="#000"/></svg>
<div class="a" style="left:731px;top:524px;width:16px;height:12px;background:#d4d0c8;border-top:1px solid #fff;border-left:1px solid #fff;border-right:1px solid #404040;border-bottom:1px solid #404040;box-shadow:inset -1px -1px 0 #808080;"></div>
<div class="a" style="left:4px;top:727px;width:727px;height:16px;background:conic-gradient(#ffffff 25%,#d4d0c8 0 50%,#ffffff 0 75%,#d4d0c8 0) 0 0/2px 2px"></div>
<div class="a" style="left:4px;top:727px;width:16px;height:16px;background:#d4d0c8;border-top:1px solid #fff;border-left:1px solid #fff;border-right:1px solid #404040;border-bottom:1px solid #404040;box-shadow:inset -1px -1px 0 #808080;"></div>
<svg class="a" style="left:9px;top:731px" width="4" height="7"><path d="M4 0V7L0 3.5Z" fill="#000"/></svg>
<div class="a" style="left:715px;top:727px;width:16px;height:16px;background:#d4d0c8;border-top:1px solid #fff;border-left:1px solid #fff;border-right:1px solid #404040;border-bottom:1px solid #404040;box-shadow:inset -1px -1px 0 #808080;"></div>
<svg class="a" style="left:721px;top:731px" width="4" height="7"><path d="M0 0V7L4 3.5Z" fill="#000"/></svg>
<div class="a" style="left:20px;top:727px;width:366px;height:16px;background:#d4d0c8;border-top:1px solid #fff;border-left:1px solid #fff;border-right:1px solid #404040;border-bottom:1px solid #404040;box-shadow:inset -1px -1px 0 #808080;"></div>
<div class="a" style="left:731px;top:727px;width:16px;height:16px;background:#d4d0c8"></div>
<div class="a" style="left:747px;top:508px;width:1px;height:235px;background:#8a8a8a"></div>
<div class="a" style="left:753px;top:428px;width:400px;height:21px;background:#6aa0dc"></div>
<div class="a t" style="left:755px;top:431.03px;line-height:16px;font-size:12px;font-weight:bold;color:#fff;letter-spacing:0.75px;">Detailinformationen</div>
<svg class="a" style="left:1136px;top:434px" width="8" height="10"><path d="M2 0.5H6V5.5H2Z" fill="none" stroke="#fff" stroke-width="1"/><rect x="5" y="0" width="1.6" height="6" fill="#fff"/><rect x="0" y="5" width="8" height="1.5" fill="#fff"/><rect x="3.2" y="6" width="1.5" height="4" fill="#fff"/></svg>
<div class="a" style="left:753px;top:449px;width:400px;height:2px;background:#d6d3cc"></div>
<div class="a" style="left:753px;top:451px;width:400px;height:292px;background:#c5c3c6"></div>
<div class="a t" style="left:758px;top:457.27px;line-height:15px;font-size:11px;transform:scaleY(1.125);transform-origin:0 0;">Hersteller</div>
<div class="a t" style="left:758px;top:478.27px;line-height:15px;font-size:11px;transform:scaleY(1.125);transform-origin:0 0;">Bestell-Nr.</div>
<div class="a t" style="left:758px;top:500.27px;line-height:15px;font-size:11px;transform:scaleY(1.125);transform-origin:0 0;">Status</div>
<div class="a t" style="left:758px;top:522.27px;line-height:15px;font-size:11px;transform:scaleY(1.125);transform-origin:0 0;">Materialtyp</div>
<div class="a t" style="left:758px;top:543.27px;line-height:15px;font-size:11px;transform:scaleY(1.125);transform-origin:0 0;">Materialname</div>
<div class="a t" style="left:758px;top:578.27px;line-height:15px;font-size:11px;transform:scaleY(1.125);transform-origin:0 0;">Materialbeschreib...</div>
<div class="a t" style="left:758px;top:595.27px;line-height:15px;font-size:11px;transform:scaleY(1.125);transform-origin:0 0;">Hinweis</div>
<div class="a" style="left:856px;top:455px;width:169px;height:20px;background:#eef2fd;border:1px solid #a8c3e6"></div>
<div class="a t" style="left:860px;top:457.27px;line-height:15px;font-size:11px;transform:scaleY(1.125);transform-origin:0 0;">HARTING</div>
<div class="a" style="left:856px;top:476px;width:169px;height:20px;background:#ffa500;border:1px solid #a8c3e6"></div>
<div class="a t" style="left:860px;top:478.27px;line-height:15px;font-size:11px;transform:scaleY(1.125);transform-origin:0 0;">09200032633</div>
<div class="a t" style="left:768px;top:457.27px;line-height:15px;font-size:11px;transform:scaleY(1.125);transform-origin:0 0;width:300px;overflow:hidden;text-overflow:ellipsis;text-align:right;">VE</div>
<div class="a t" style="left:768px;top:478.27px;line-height:15px;font-size:11px;transform:scaleY(1.125);transform-origin:0 0;width:300px;overflow:hidden;text-overflow:ellipsis;text-align:right;">UVP</div>
<div class="a" style="left:1070px;top:455px;width:79px;height:20px;background:#eef2fd;border:1px solid #a8c3e6"></div>
<div class="a t" style="left:831px;top:457.27px;line-height:15px;font-size:11px;transform:scaleY(1.125);transform-origin:0 0;width:300px;overflow:hidden;text-overflow:ellipsis;text-align:right;">1,00</div>
<svg class="a" style="left:1139px;top:460px" width="5" height="14"><path d="M0 3H5L2.5 0.5Z" fill="#0b3b8f"/><path d="M0 11H5L2.5 13.5Z" fill="#0b3b8f"/></svg>
<div class="a" style="left:1070px;top:476px;width:79px;height:20px;background:#eef2fd;border:1px solid #a8c3e6"></div>
<div class="a t" style="left:831px;top:478.27px;line-height:15px;font-size:11px;transform:scaleY(1.125);transform-origin:0 0;width:300px;overflow:hidden;text-overflow:ellipsis;text-align:right;">3,90</div>
<svg class="a" style="left:1139px;top:481px" width="5" height="14"><path d="M0 3H5L2.5 0.5Z" fill="#0b3b8f"/><path d="M0 11H5L2.5 13.5Z" fill="#0b3b8f"/></svg>
<div class="a" style="left:856px;top:497px;width:250px;height:20px;background:#c5c3c6;border:1px solid #a8c3e6"></div>
<div class="a" style="left:1091px;top:498px;width:14px;height:18px;background:#eef2fd"></div>
<svg class="a" style="left:1093px;top:505px" width="9" height="5"><path d="M0 0H9L4.5 4.5Z" fill="#4a7cc0"/></svg>
<div class="a t" style="left:861px;top:499.27px;line-height:15px;font-size:11px;transform:scaleY(1.125);transform-origin:0 0;">Aktiv</div>
<div class="a" style="left:856px;top:520px;width:250px;height:21px;background:#eef2fd;border:1px solid #a8c3e6"></div>
<div class="a" style="left:1091px;top:521px;width:14px;height:19px;background:#eef2fd"></div>
<svg class="a" style="left:1093px;top:529px" width="9" height="5"><path d="M0 0H9L4.5 4.5Z" fill="#4a7cc0"/></svg>
<div class="a t" style="left:861px;top:522.27px;line-height:15px;font-size:11px;transform:scaleY(1.125);transform-origin:0 0;">Steckverbinder</div>
<div class="a" style="left:856px;top:544px;width:294px;height:35px;background:#eef2fd;border:1px solid #a8c3e6"></div>
<div class="a t" style="left:860px;top:544.27px;line-height:15px;font-size:11px;transform:scaleY(1.125);transform-origin:0 0;">Han   3A ,  Stifteinsatz , 3pol + PE , 230/400V , 10A |</div>
<div class="a t" style="left:860px;top:557.27px;line-height:15px;font-size:11px;transform:scaleY(1.125);transform-origin:0 0;">(Typ Han 3 A)</div>
<div class="a" style="left:856px;top:579px;width:294px;height:23px;background:#eef2fd;border:1px solid #a8c3e6"></div>
<div class="a t" style="left:860px;top:579.27px;line-height:15px;font-size:11px;transform:scaleY(1.125);transform-origin:0 0;">passt in Baugröße   3A | Quick Lock Anschluss</div>
<div class="a" style="left:856px;top:602px;width:294px;height:12px;background:#eef2fd;border:1px solid #a8c3e6;overflow:hidden"><div class="t" style="position:absolute;left:3px;top:-6px;line-height:15px;font-size:11px;transform:scaleY(1.125);transform-origin:0 0">Baugroße  muss übereinstimmen!  3A oder 10B z.B.</div></div>
<svg class="a" style="left:758px;top:615px" width="16" height="16"><circle cx="7.5" cy="6.7" r="6.5" fill="#3f83d2"/><path d="M8.5 0.8L6.8 2.8L5.5 2.2L4.8 3.8L2.6 5.5L4.5 6.5L6.2 9.2L6.5 12.8L8 12L7.6 8.8L6.5 6.8L8.5 5.2L10 6L11.5 5L10.2 3.6L11.5 2.5Z" fill="#e4ecf6"/><rect x="5" y="11.2" width="5.5" height="3.5" rx="1.7" fill="#c8c6c8" stroke="#6e6e6e" stroke-width="1.2"/><rect x="9.5" y="11.2" width="5.5" height="3.5" rx="1.7" fill="none" stroke="#6e6e6e" stroke-width="1.2"/></svg>
<div class="a" style="left:757px;top:635px;width:393px;height:77px;background:#fff;border:1px solid #a8c3e6"></div>
<div class="a" style="left:758px;top:636px;width:149px;height:19px;background:linear-gradient(#f6f5f1,#e6e4dd);border-right:1px solid #c0beb6;border-bottom:1px solid #c8c6be"></div>
<div class="a t" style="left:762px;top:637.27px;line-height:15px;font-size:11px;transform:scaleY(1.125);transform-origin:0 0;">Lieferant</div>
<div class="a" style="left:907px;top:636px;width:50px;height:19px;background:linear-gradient(#f6f5f1,#e6e4dd);border-right:1px solid #c0beb6;border-bottom:1px solid #c8c6be"></div>
<div class="a t" style="left:911px;top:637.27px;line-height:15px;font-size:11px;transform:scaleY(1.125);transform-origin:0 0;">UVP/St</div>
<div class="a" style="left:957px;top:636px;width:50px;height:19px;background:linear-gradient(#f6f5f1,#e6e4dd);border-right:1px solid #c0beb6;border-bottom:1px solid #c8c6be"></div>
<div class="a t" style="left:961px;top:637.27px;line-height:15px;font-size:11px;transform:scaleY(1.125);transform-origin:0 0;">Lief. Ra</div>
<div class="a" style="left:1007px;top:636px;width:50px;height:19px;background:linear-gradient(#f6f5f1,#e6e4dd);border-right:1px solid #c0beb6;border-bottom:1px solid #c8c6be"></div>
<div class="a t" style="left:1011px;top:637.27px;line-height:15px;font-size:11px;transform:scaleY(1.125);transform-origin:0 0;">EK/Stk.</div>
<div class="a" style="left:1057px;top:636px;width:50px;height:19px;background:linear-gradient(#f6f5f1,#e6e4dd);border-right:1px solid #c0beb6;border-bottom:1px solid #c8c6be"></div>
<div class="a t" style="left:1061px;top:637.27px;line-height:15px;font-size:11px;transform:scaleY(1.125);transform-origin:0 0;">min. Be</div>
<div class="a" style="left:1107px;top:636px;width:42px;height:19px;background:linear-gradient(#f6f5f1,#e6e4dd);border-right:1px solid #c0beb6;border-bottom:1px solid #c8c6be"></div>
<div class="a t" style="left:1111px;top:637.27px;line-height:15px;font-size:11px;transform:scaleY(1.125);transform-origin:0 0;">Sonder-</div>
<svg class="a" style="left:757px;top:659px" width="16" height="12"><rect x="0" y="1" width="9" height="6" fill="#e0a000"/><path d="M9 3H13L15 6.5V9.5H9Z" fill="#111"/><path d="M10.2 4H12.5L13.8 6H10.2Z" fill="#fff"/><rect x="1.5" y="8.2" width="8" height="1.2" fill="#111"/><circle cx="4.5" cy="9.6" r="1.5" fill="#fff" stroke="#111" stroke-width="1"/><circle cx="11.5" cy="9.6" r="1.5" fill="#fff" stroke="#111" stroke-width="1"/></svg>
<div class="a t" style="left:776px;top:656.27px;line-height:15px;font-size:11px;transform:scaleY(1.125);transform-origin:0 0;">UMO</div>
<div class="a t" style="left:656px;top:656.27px;line-height:15px;font-size:11px;transform:scaleY(1.125);transform-origin:0 0;width:300px;overflow:hidden;text-overflow:ellipsis;text-align:right;">3,90</div>
<div class="a t" style="left:706px;top:656.27px;line-height:15px;font-size:11px;transform:scaleY(1.125);transform-origin:0 0;width:300px;overflow:hidden;text-overflow:ellipsis;text-align:right;">0,00</div>
<div class="a t" style="left:756px;top:656.27px;line-height:15px;font-size:11px;transform:scaleY(1.125);transform-origin:0 0;width:300px;overflow:hidden;text-overflow:ellipsis;text-align:right;">3,90</div>
<div class="a t" style="left:805px;top:656.27px;line-height:15px;font-size:11px;transform:scaleY(1.125);transform-origin:0 0;width:300px;overflow:hidden;text-overflow:ellipsis;text-align:right;">1</div>
<div class="a" style="left:758px;top:696px;width:391px;height:15px;background:conic-gradient(#ffffff 25%,#d4d0c8 0 50%,#ffffff 0 75%,#d4d0c8 0) 0 0/2px 2px"></div>
<div class="a" style="left:758px;top:696px;width:15px;height:15px;background:#d8d6d0;border-right:1px solid #a8c3e6"></div>
<svg class="a" style="left:763px;top:700px" width="4" height="7"><path d="M4 0V7L0 3.5Z" fill="#000"/></svg>
<div class="a" style="left:773px;top:696px;width:234px;height:15px;background:#d8d6d0;border-right:1px solid #a8c3e6"></div>
<div class="a" style="left:1133px;top:696px;width:16px;height:15px;background:#d8d6d0;border-left:1px solid #a8c3e6"></div>
<svg class="a" style="left:1139px;top:700px" width="4" height="7"><path d="M0 0V7L4 3.5Z" fill="#000"/></svg>
<div class="a" style="left:757px;top:714px;width:393px;height:22px;background:#ffe4c4;border:1px solid #a8a6a0"></div>
<div class="a t" style="left:756px;top:717.27px;line-height:15px;font-size:11px;transform:scaleY(1.125);transform-origin:0 0;width:393px;overflow:hidden;text-overflow:ellipsis;text-align:center;">Artikel und Lieferant hinzufügen</div>
<div class="a" style="left:759px;top:738px;width:90px;height:5px;overflow:hidden"><div class="t" style="position:absolute;left:0;top:-2px;line-height:15px;font-size:11px;transform:scaleY(1.125);transform-origin:0 0">Interne Info</div></div>
<div class="a" style="left:856px;top:738px;width:294px;height:5px;background:#ffe4c4;border:1px solid #a8c3e6;border-bottom:none"></div>
<div class="a" style="left:3px;top:743px;width:1150px;height:1px;background:#7a7a7a"></div>
<div class="a" style="left:3px;top:744px;width:1150px;height:2px;background:#d4d0c8"></div>
</body></html>
